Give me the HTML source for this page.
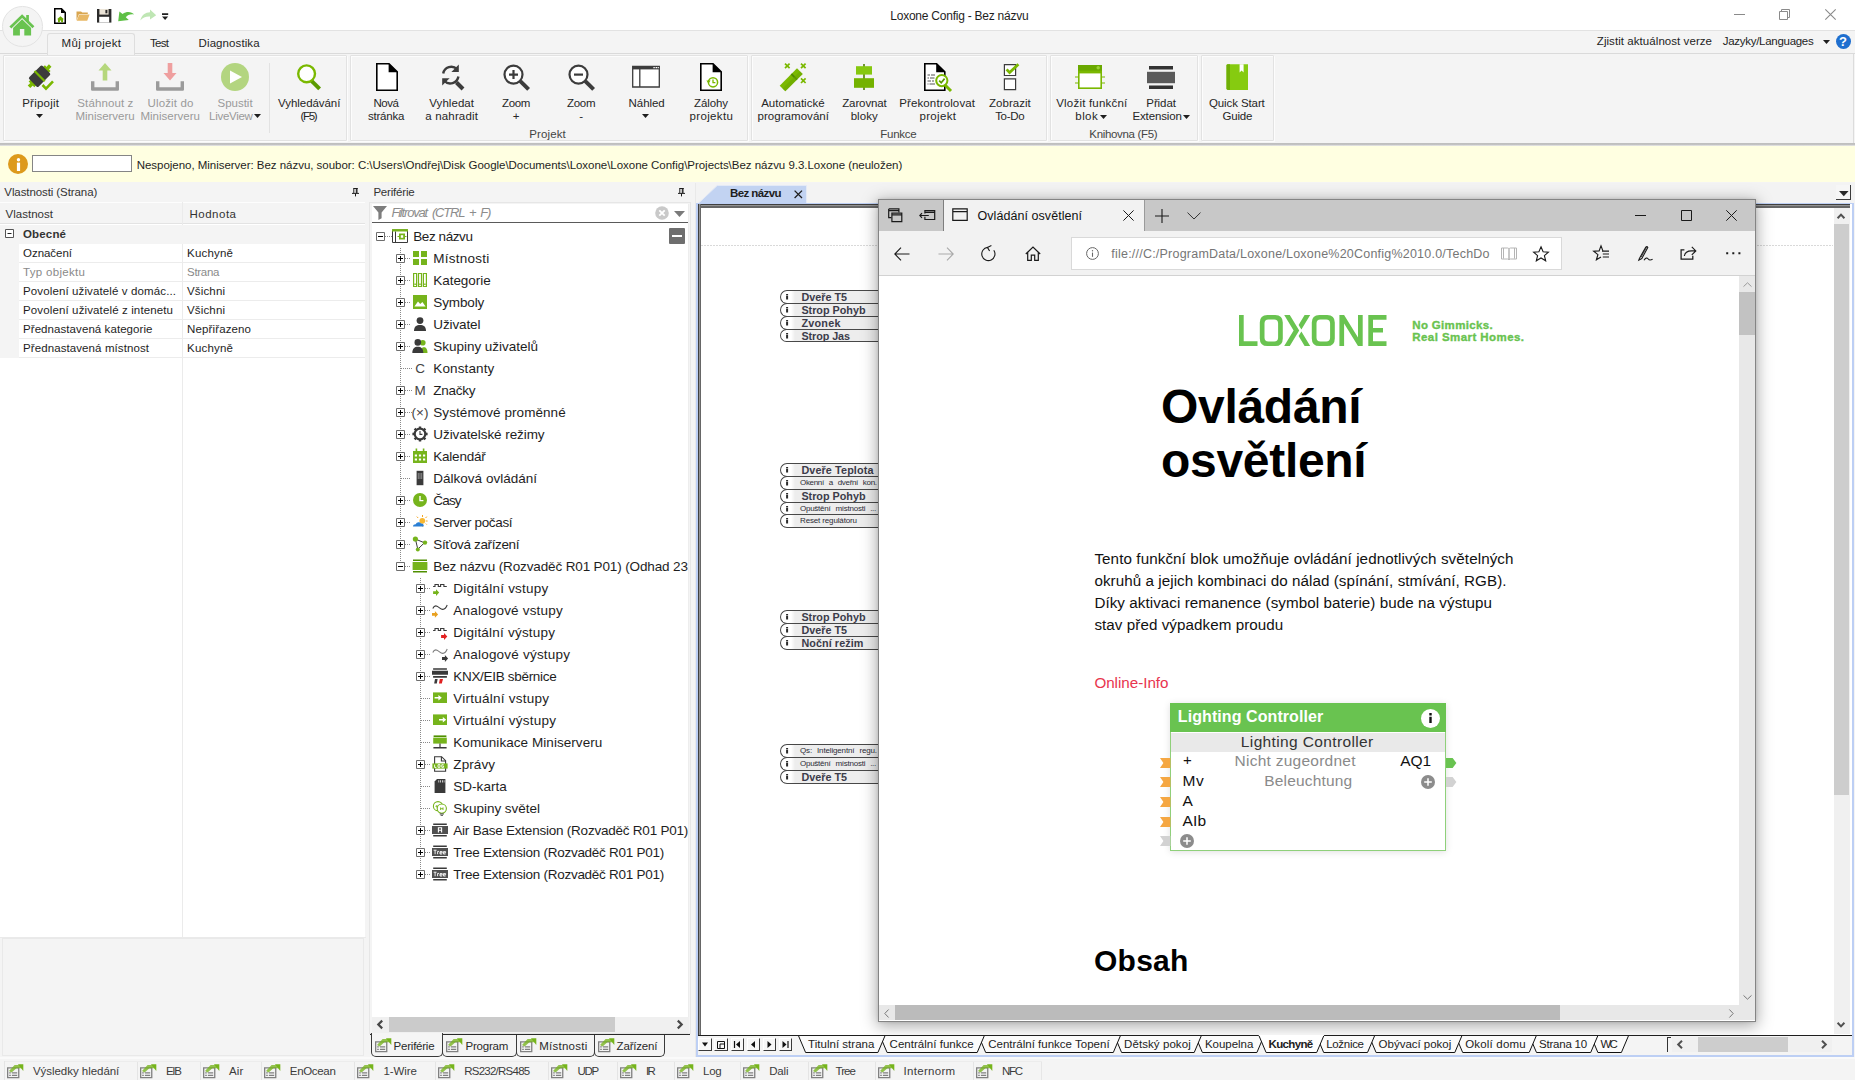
<!DOCTYPE html>
<html><head><meta charset="utf-8"><title>Loxone Config - Bez názvu</title>
<style>
html,body{margin:0;padding:0;}
body{width:1855px;height:1080px;overflow:hidden;position:relative;background:#f3f3f3;font-family:"Liberation Sans",sans-serif;font-size:12px;color:#1e1e1e;}
div,span,svg{position:absolute;box-sizing:border-box;}
span{white-space:pre;}
svg{overflow:visible;}
</style></head><body>
<div style="left:0px;top:0px;width:1855px;height:30px;background:#ffffff;"></div>
<span style="left:890.30px;top:8px;font-size:12px;line-height:17px;color:#1e1e1e;letter-spacing:-0.237px;">Loxone Config - Bez názvu</span>
<div style="left:0px;top:30px;width:1855px;height:24px;background:#f4f4f4;border-top:1px solid #e2e2e2;"></div>
<div style="left:0px;top:53px;width:1855px;height:1px;background:#dadada;"></div>
<div style="left:0px;top:54px;width:1855px;height:89px;background:#f4f4f4;"></div>
<div style="left:0px;top:142px;width:1855px;height:3.5px;background:linear-gradient(#f4f4f4 0,#f4f4f4 25%,#b4b4b4 40%,#c4c4c4 65%,#ececec 100%);"></div>
<div style="left:0px;top:145.5px;width:1855px;height:36.5px;background:#ffffe1;"></div>
<div style="left:0px;top:182px;width:1855px;height:898px;background:#f4f4f4;"></div>
<div style="left:2px;top:6px;width:40.6px;height:40.6px;background:#f4f4f4;border-radius:50%;border:1px solid #e3e3e3;"></div>
<svg style="left:9px;top:14px;" width="26" height="23" viewBox="0 0 26 23"><path d="M1.4 13.6L13.1 2.1L24.4 13.2" fill="none" stroke="#69c350" stroke-width="2.8" stroke-linejoin="miter"/><path d="M4.1 21.4V13.9L13.1 5.3L22.1 13.9V21.4H15.3V15.1H10.9V21.4Z" fill="#69c350"/><path d="M17.2 1H19.9V8L17.2 5.4Z" fill="#69c350"/></svg>
<svg style="left:54px;top:8px;" width="12" height="16" viewBox="0 0 12 16"><path d="M0.75 0.75H7.5L11.25 4.5V15.25H0.75Z" fill="#fff" stroke="#000" stroke-width="1.5"/><path d="M7 0.5L11.5 5H7Z" fill="#000"/><path d="M6.5 8.2L3 11.3H4V14.2H5.9V12.4H7.1V14.2H9V11.3H10Z" fill="#6aa800"/></svg>
<svg style="left:75.5px;top:11px;" width="14" height="10" viewBox="0 0 14 10"><path d="M0.5 0.4H5L6.3 1.6H11.8V3H3L0.5 9.4Z" fill="#d9a650"/><path d="M3.2 3.4H13.6L11.2 9.8H0.7Z" fill="#e8b866"/></svg>
<svg style="left:96.7px;top:9.2px;" width="14.4" height="13.6" viewBox="0 0 14.4 13.6"><path d="M0 0H14.4V13.6H0Z" fill="#2b2b2b"/><path d="M2.4 0H11.6V5.6H2.4Z" fill="#ece5d8"/><path d="M8.4 0.9H10.4V4.3H8.4Z" fill="#2b2b2b"/><path d="M2.2 7.8H12.2V13.6H2.2Z" fill="#fff"/></svg>
<svg style="left:117.7px;top:10.6px;" width="16.4" height="10.6" viewBox="0 0 16.4 10.6"><path d="M0.2 10.2L1.4 0.4L4.6 3C8.8 0 13.6 0.6 16.3 3.6C12.4 2.8 9.6 4.2 7.8 6.2L10.8 9Z" fill="#5fc047"/></svg>
<svg style="left:139.6px;top:9.4px;" width="16.4" height="11.8" viewBox="0 0 16.4 11.8"><path d="M16.2 6.2L10 0.4V3.2C5.6 3.2 1.4 6 0.3 11.6C2.6 8.6 5.8 7.4 10 7.6V10.6Z" fill="#bfe6b4"/></svg>
<svg style="left:162.2px;top:13px;" width="6.2" height="7" viewBox="0 0 6.2 7"><path d="M0 0.3H6.2V1.9H0Z M0 3.4H6.2L3.1 7Z" fill="#1e1e1e"/></svg>
<div style="left:47px;top:33px;width:87.5px;height:21.5px;background:#f4f4f4;border:1px solid #dedede;border-bottom:none;border-radius:3px 3px 0 0;"></div>
<span style="left:61.50px;top:35px;font-size:11.5px;line-height:16px;color:#262626;letter-spacing:0.326px;">Můj projekt</span>
<span style="left:150.00px;top:35px;font-size:11.5px;line-height:16px;color:#262626;letter-spacing:-0.697px;">Test</span>
<span style="left:198.60px;top:35px;font-size:11.5px;line-height:16px;color:#262626;letter-spacing:0.091px;">Diagnostika</span>
<span style="left:1596.80px;top:33px;font-size:11.5px;line-height:16px;color:#1e1e1e;letter-spacing:0.062px;">Zjistit aktuálnost verze</span>
<span style="left:1722.80px;top:33px;font-size:11.5px;line-height:16px;color:#1e1e1e;letter-spacing:-0.290px;">Jazyky/Languages</span>
<svg style="left:1823.1px;top:39.5px;" width="7" height="4" viewBox="0 0 7 4"><path d="M0 0H7L3.5 4Z" fill="#1e1e1e"/></svg>
<div style="left:1835.5px;top:33.5px;width:15px;height:15px;background:#1f6fcf;border-radius:50%;"></div>
<span style="left:1839.03px;top:33px;font-size:13px;line-height:18px;color:#fff;letter-spacing:0.000px;font-weight:bold;">?</span>
<svg style="left:1733.5px;top:13.5px;" width="11" height="1" viewBox="0 0 11 1"><path d="M0 0.5H11" stroke="#8a8a8a" stroke-width="1"/></svg>
<svg style="left:1778.5px;top:8.5px;" width="11" height="11" viewBox="0 0 11 11"><path d="M2.5 2.5V0.5H10.5V8.5H8.5M0.5 2.5H8.5V10.5H0.5Z" fill="none" stroke="#8a8a8a" stroke-width="1"/></svg>
<svg style="left:1824.5px;top:8.5px;" width="11" height="11" viewBox="0 0 11 11"><path d="M0.3 0.3L10.7 10.7M10.7 0.3L0.3 10.7" stroke="#8a8a8a" stroke-width="1.1"/></svg>
<div style="left:3px;top:55px;width:344px;height:86px;border:1px solid #e2e2e2;border-radius:1px;box-shadow:inset 1px 1px 0 #fcfcfc,1px 1px 0 #fcfcfc;"></div>
<div style="left:350px;top:55px;width:398px;height:86px;border:1px solid #e2e2e2;border-radius:1px;box-shadow:inset 1px 1px 0 #fcfcfc,1px 1px 0 #fcfcfc;"></div>
<div style="left:751px;top:55px;width:296px;height:86px;border:1px solid #e2e2e2;border-radius:1px;box-shadow:inset 1px 1px 0 #fcfcfc,1px 1px 0 #fcfcfc;"></div>
<div style="left:1050px;top:55px;width:148px;height:86px;border:1px solid #e2e2e2;border-radius:1px;box-shadow:inset 1px 1px 0 #fcfcfc,1px 1px 0 #fcfcfc;"></div>
<div style="left:1201px;top:55px;width:73px;height:86px;border:1px solid #e2e2e2;border-radius:1px;box-shadow:inset 1px 1px 0 #fcfcfc,1px 1px 0 #fcfcfc;"></div>
<div style="left:1852.5px;top:54px;width:1px;height:89px;background:#dcdcdc;"></div>
<div style="left:269px;top:63px;width:1px;height:70px;background:#e2e2e2;"></div>
<span style="left:529.25px;top:126px;font-size:11.5px;line-height:16px;color:#444444;letter-spacing:0.118px;">Projekt</span>
<span style="left:880.35px;top:126px;font-size:11.5px;line-height:16px;color:#444444;letter-spacing:-0.282px;">Funkce</span>
<span style="left:1089.30px;top:126px;font-size:11.5px;line-height:16px;color:#444444;letter-spacing:-0.319px;">Knihovna (F5)</span>
<span style="left:22.20px;top:95px;font-size:11.5px;line-height:16px;color:#262626;letter-spacing:0.236px;">Připojit</span>
<svg style="left:36.0px;top:114px;" width="7" height="4" viewBox="0 0 7 4"><path d="M0 0H7L3.5 4Z" fill="#1e1e1e"/></svg>
<span style="left:77.30px;top:95px;font-size:11.5px;line-height:16px;color:#9a9a9a;letter-spacing:0.113px;">Stáhnout z</span>
<span style="left:75.40px;top:108px;font-size:11.5px;line-height:16px;color:#9a9a9a;letter-spacing:-0.013px;">Miniserveru</span>
<span style="left:147.50px;top:95px;font-size:11.5px;line-height:16px;color:#9a9a9a;letter-spacing:0.145px;">Uložit do</span>
<span style="left:140.40px;top:108px;font-size:11.5px;line-height:16px;color:#9a9a9a;letter-spacing:0.007px;">Miniserveru</span>
<span style="left:217.50px;top:95px;font-size:11.5px;line-height:16px;color:#9a9a9a;letter-spacing:-0.009px;">Spustit</span>
<span style="left:209.10px;top:108px;font-size:11.5px;line-height:16px;color:#9a9a9a;letter-spacing:-0.302px;">LiveView</span>
<svg style="left:253.8px;top:114px;" width="7" height="4" viewBox="0 0 7 4"><path d="M0 0H7L3.5 4Z" fill="#1e1e1e"/></svg>
<span style="left:278.10px;top:95px;font-size:11.5px;line-height:16px;color:#262626;letter-spacing:-0.057px;">Vyhledávání</span>
<span style="left:300.40px;top:108px;font-size:11.5px;line-height:16px;color:#262626;letter-spacing:-1.260px;">(F5)</span>
<span style="left:373.50px;top:95px;font-size:11.5px;line-height:16px;color:#262626;letter-spacing:-0.515px;">Nová</span>
<span style="left:367.90px;top:108px;font-size:11.5px;line-height:16px;color:#262626;letter-spacing:-0.202px;">stránka</span>
<span style="left:429.30px;top:95px;font-size:11.5px;line-height:16px;color:#262626;letter-spacing:0.053px;">Vyhledat</span>
<span style="left:425.30px;top:108px;font-size:11.5px;line-height:16px;color:#262626;letter-spacing:0.161px;">a nahradit</span>
<span style="left:502.10px;top:95px;font-size:11.5px;line-height:16px;color:#262626;letter-spacing:-0.365px;">Zoom</span>
<span style="left:512.64px;top:108px;font-size:11.5px;line-height:16px;color:#262626;letter-spacing:-0.716px;">+</span>
<span style="left:567.00px;top:95px;font-size:11.5px;line-height:16px;color:#262626;letter-spacing:-0.299px;">Zoom</span>
<span style="left:579.29px;top:108px;font-size:11.5px;line-height:16px;color:#262626;letter-spacing:-0.230px;">-</span>
<span style="left:628.60px;top:95px;font-size:11.5px;line-height:16px;color:#262626;letter-spacing:-0.069px;">Náhled</span>
<svg style="left:642.0px;top:114px;" width="7" height="4" viewBox="0 0 7 4"><path d="M0 0H7L3.5 4Z" fill="#1e1e1e"/></svg>
<span style="left:694.00px;top:95px;font-size:11.5px;line-height:16px;color:#262626;letter-spacing:-0.083px;">Zálohy</span>
<span style="left:689.60px;top:108px;font-size:11.5px;line-height:16px;color:#262626;letter-spacing:0.327px;">projektu</span>
<span style="left:761.20px;top:95px;font-size:11.5px;line-height:16px;color:#262626;letter-spacing:0.012px;">Automatické</span>
<span style="left:757.50px;top:108px;font-size:11.5px;line-height:16px;color:#262626;letter-spacing:0.050px;">programování</span>
<span style="left:842.20px;top:95px;font-size:11.5px;line-height:16px;color:#262626;letter-spacing:-0.112px;">Zarovnat</span>
<span style="left:850.70px;top:108px;font-size:11.5px;line-height:16px;color:#262626;letter-spacing:0.038px;">bloky</span>
<span style="left:899.20px;top:95px;font-size:11.5px;line-height:16px;color:#262626;letter-spacing:0.127px;">Překontrolovat</span>
<span style="left:919.50px;top:108px;font-size:11.5px;line-height:16px;color:#262626;letter-spacing:0.314px;">projekt</span>
<span style="left:989.00px;top:95px;font-size:11.5px;line-height:16px;color:#262626;letter-spacing:0.023px;">Zobrazit</span>
<span style="left:995.20px;top:108px;font-size:11.5px;line-height:16px;color:#262626;letter-spacing:-0.319px;">To-Do</span>
<span style="left:1056.20px;top:95px;font-size:11.5px;line-height:16px;color:#262626;letter-spacing:0.208px;">Vložit funkční</span>
<span style="left:1075.30px;top:108px;font-size:11.5px;line-height:16px;color:#262626;letter-spacing:0.435px;">blok</span>
<svg style="left:1100.0px;top:114.5px;" width="7" height="4" viewBox="0 0 7 4"><path d="M0 0H7L3.5 4Z" fill="#1e1e1e"/></svg>
<span style="left:1146.30px;top:95px;font-size:11.5px;line-height:16px;color:#262626;letter-spacing:-0.088px;">Přidat</span>
<span style="left:1132.50px;top:108px;font-size:11.5px;line-height:16px;color:#262626;letter-spacing:-0.150px;">Extension</span>
<svg style="left:1183.0px;top:114.5px;" width="7" height="4" viewBox="0 0 7 4"><path d="M0 0H7L3.5 4Z" fill="#1e1e1e"/></svg>
<span style="left:1209.00px;top:95px;font-size:11.5px;line-height:16px;color:#262626;letter-spacing:-0.108px;">Quick Start</span>
<span style="left:1222.40px;top:108px;font-size:11.5px;line-height:16px;color:#262626;letter-spacing:-0.172px;">Guide</span>
<svg style="left:24.5px;top:61px;" width="32" height="32" viewBox="0 0 32 32"><g transform="translate(0.6 -0.8) rotate(-45 14 16)"><path d="M-1 14.2H3V17.8H-1Z M25 14.2H29V17.8H25Z" fill="#7ab800"/><path d="M2.5 12H5.5V20H2.5Z M22.5 12H25.5V20H22.5Z" fill="#7ab800"/><rect x="4.6" y="9.4" width="18.8" height="13.2" rx="1.6" fill="#3c3c3c"/><path d="M13 8.8H15.2V23.2H13Z" fill="#7ab800"/></g><path d="M17.5 24L21 27.6L28 20.4" fill="none" stroke="#7ab800" stroke-width="2.6"/></svg>
<svg style="left:89px;top:61px;" width="32" height="32" viewBox="0 0 32 32"><path d="M2 20.2H5.4V26.2H26.6V20.2H30V28.6Q30 29.8 28.8 29.8H3.2Q2 29.8 2 28.6Z" fill="#9b9b9b"/><path d="M16 2L22.5 9.5H18.3V19.5H13.7V9.5H9.5Z" fill="#b5d77c"/></svg>
<svg style="left:154px;top:61px;" width="32" height="32" viewBox="0 0 32 32"><path d="M2 20.2H5.4V26.2H26.6V20.2H30V28.6Q30 29.8 28.8 29.8H3.2Q2 29.8 2 28.6Z" fill="#9b9b9b"/><path d="M16 19.5L22.5 12H18.3V2H13.7V12H9.5Z" fill="#ef9f9f"/></svg>
<svg style="left:219px;top:61px;" width="32" height="32" viewBox="0 0 32 32"><circle cx="16" cy="16" r="14" fill="#b3d580"/><path d="M11 9.5L23 16L11 22.5Z" fill="#fff"/></svg>
<svg style="left:290.5px;top:61px;" width="32" height="32" viewBox="0 0 32 32"><path d="M20.3 19.6L28.6 27.8" stroke="#5a9a00" stroke-width="4" stroke-linecap="butt"/><circle cx="15.6" cy="12.8" r="8.4" fill="#fff" stroke="#7ab800" stroke-width="2.4"/></svg>
<svg style="left:371px;top:61px;" width="32" height="32" viewBox="0 0 32 32"><path d="M5.8 3H15.8L26.2 13.4V29.6H5.8Z" fill="#fff" stroke="#000" stroke-width="1.6" transform="translate(0 -0.3)"/><path d="M5.8 2.7H18L26.2 10.9V29.3H5.8Z" fill="#fff" stroke="#000" stroke-width="1.6"/><path d="M17.6 2.3L26.6 11.3H17.6Z" fill="#000"/></svg>
<svg style="left:434.6px;top:61px;" width="32" height="32" viewBox="0 0 32 32"><path d="M21.5 21.5L28 28" stroke="#3c3c3c" stroke-width="4"/>
      <path d="M8.2 12.5A8.2 8.2 0 0 1 22 8.2" fill="none" stroke="#3c3c3c" stroke-width="2.4"/><path d="M23.8 3.6V11H16.4Z" fill="#3c3c3c"/>
      <path d="M23.4 15.5A8.2 8.2 0 0 1 9.2 19.8" fill="none" stroke="#3c3c3c" stroke-width="2.4"/><path d="M7.2 24.6V17.2H14.6Z" fill="#3c3c3c"/></svg>
<svg style="left:500px;top:61px;" width="32" height="32" viewBox="0 0 32 32"><path d="M20.3 20.2L28.6 28.4" stroke="#3c3c3c" stroke-width="4"/><circle cx="13.5" cy="13.6" r="9" fill="#fff" stroke="#3c3c3c" stroke-width="2.2"/><path d="M9 13.6H18M13.5 9.1V18.1" stroke="#3c3c3c" stroke-width="2.2"/></svg>
<svg style="left:565px;top:61px;" width="32" height="32" viewBox="0 0 32 32"><path d="M20.3 20.2L28.6 28.4" stroke="#3c3c3c" stroke-width="4"/><circle cx="13.5" cy="13.6" r="9" fill="#fff" stroke="#3c3c3c" stroke-width="2.2"/><path d="M9 13.6H18" stroke="#3c3c3c" stroke-width="2.2"/></svg>
<svg style="left:630px;top:61px;" width="32" height="32" viewBox="0 0 32 32"><path d="M2.7 5.4H29.3V26H2.7Z" fill="#fff" stroke="#3c3c3c" stroke-width="1.3"/><path d="M2.7 5H29.3V8.4H2.7Z" fill="#3c3c3c"/><path d="M9.8 8V26" stroke="#3c3c3c" stroke-width="1.3"/><path d="M23.4 6.1H24.8V7.2H23.4Z M25.6 6.1H27V7.2H25.6Z M27.6 6.1H28.8V7.2H27.6Z" fill="#fff"/></svg>
<svg style="left:695px;top:61px;" width="32" height="32" viewBox="0 0 32 32"><path d="M5.8 2.7H18L26.2 10.9V29.3H5.8Z" fill="#fff" stroke="#000" stroke-width="1.6"/><path d="M17.6 2.3L26.6 11.3H17.6Z" fill="#000"/><circle cx="18" cy="21.3" r="4.6" fill="none" stroke="#7ab800" stroke-width="1.5"/><path d="M11.4 19.6H15.6L13.5 22.6Z" fill="#7ab800"/><path d="M18 18.6V21.6H20.4" fill="none" stroke="#7ab800" stroke-width="1.3"/><path d="M12.4 18H15V24H12.4Z" fill="#fff" opacity="0"/></svg>
<svg style="left:777.5px;top:61px;" width="32" height="32" viewBox="0 0 32 32"><g transform="rotate(-45 13 19)"><path d="M1 15H25.5V23H1Z" fill="#7ab800"/><path d="M16.6 15H18.4V23H16.6Z" fill="#4f8a00"/><path d="M1 19H25.5V23H1Z" fill="#6aa500" opacity=".55"/></g>
      <path d="M7 2.6L11.6 7.2M11.6 2.6L7 7.2 M23 2.6L27.6 7.2M27.6 2.6L23 7.2 M23 17.4L27.6 22M27.6 17.4L23 22" stroke="#7ab800" stroke-width="1.7"/></svg>
<svg style="left:848px;top:61px;" width="32" height="32" viewBox="0 0 32 32"><path d="M15.2 3H16.8V29H15.2Z" fill="#4f7f00"/><path d="M8 5.2H24V13.6H8Z" fill="#86c80f"/><path d="M6 17.2H26V26.8H6Z" fill="#74b200"/></svg>
<svg style="left:922px;top:61px;" width="32" height="32" viewBox="0 0 32 32"><path d="M2.8 2.7H14.6L22.8 10.9V29.3H2.8Z" fill="#fff" stroke="#000" stroke-width="1.6"/><path d="M14.2 2.3L23.2 11.3H14.2Z" fill="#000"/>
      <path d="M5.5 14H8M9 14H13 M5.5 17H7M8 17H12.5 M5.5 20H9M10 20H12 M5.5 23H6.5M7.5 23H13" stroke="#555" stroke-width="1"/>
      <path d="M23.5 24.5L29 30" stroke="#7ab800" stroke-width="3"/><circle cx="19.8" cy="19.6" r="5.6" fill="#fff" stroke="#7ab800" stroke-width="2"/><path d="M17.2 19.6L19.2 21.8L22.6 17.6" fill="none" stroke="#5a9a00" stroke-width="1.7"/></svg>
<svg style="left:994px;top:61px;" width="32" height="32" viewBox="0 0 32 32"><path d="M10.4 3.7H21.6V14.5H10.4Z M10.4 17.9H21.6V28.7H10.4Z" fill="#fff" stroke="#3c3c3c" stroke-width="1.2"/><path d="M12.6 8.4L15.6 11.6L24.4 3.2" fill="none" stroke="#7ab800" stroke-width="2.8"/></svg>
<svg style="left:1074px;top:61px;" width="32" height="32" viewBox="0 0 32 32"><path d="M1 16H4M1 22H4 M28 16H31M28 22H31" stroke="#7ab800" stroke-width="1.2"/><path d="M4 4H28V28H4Z" fill="#7ab800"/><path d="M4 4H28V9.6H4Z" fill="#6aa800"/><path d="M5.6 12.4H26.4V26.4H5.6Z" fill="#fff"/><circle cx="24.2" cy="6.8" r="1.7" fill="#9bd434"/></svg>
<svg style="left:1145px;top:61px;" width="32" height="32" viewBox="0 0 32 32"><path d="M4 5H28V8.6H4Z M4 24.4H28V28H4Z" fill="#333"/><path d="M2 10.8H30V22.2H2Z" fill="#5a5a5a"/></svg>
<svg style="left:1221px;top:61px;" width="32" height="32" viewBox="0 0 32 32"><path d="M5.5 4.6Q5.5 3.2 7 3.2H27V29H7Q5.5 29 5.5 27.6Z" fill="#86cb10"/><path d="M5.5 4.6Q5.5 3.2 7 3.2H9V29H7Q5.5 29 5.5 27.6Z" fill="#6fae06"/><path d="M18.6 3.2H22.6V11.4L20.6 9.6L18.6 11.4Z" fill="#fff"/></svg>
<div style="left:8px;top:153.5px;width:20px;height:20px;background:#dd9a1c;border-radius:50%;"></div>
<svg style="left:15.5px;top:157.5px;" width="5" height="13" viewBox="0 0 5 13"><circle cx="2.5" cy="1.7" r="1.7" fill="#fff"/><path d="M0.9 4.6H4.1V13H0.9Z" fill="#fff" /></svg>
<div style="left:32px;top:155px;width:100px;height:17px;background:#fff;border:1px solid #858585;"></div>
<span style="left:136.70px;top:157px;font-size:11.5px;line-height:16px;color:#1e1e1e;letter-spacing:-0.029px;">Nespojeno, Miniserver: Bez názvu, soubor: C:\Users\Ondřej\Disk Google\Documents\Loxone\Loxone Config\Projects\Bez názvu 9.3.Loxone (neuložen)</span>
<span style="left:4.30px;top:184px;font-size:11.5px;line-height:16px;color:#333;letter-spacing:-0.089px;">Vlastnosti (Strana)</span>
<svg style="left:352px;top:187.7px;" width="7" height="9" viewBox="0 0 7 9"><path d="M1.3 0.5H5.8M1.8 0.5V5M5 0.5V5M4.3 0.5V5M0 5.4H7M3.5 5.4V8.4" stroke="#1e1e1e" stroke-width="1" fill="none"/></svg>
<div style="left:0px;top:202px;width:365.4px;height:735px;background:#ffffff;"></div>
<div style="left:0px;top:202px;width:365.4px;height:22px;background:#f4f4f4;border-bottom:1px solid #e3e3e3;border-top:1px solid #fdfdfd;"></div>
<div style="left:182.4px;top:202px;width:1px;height:735px;background:#ebebeb;"></div>
<span style="left:5.50px;top:206px;font-size:11.5px;line-height:16px;color:#333;letter-spacing:0.025px;">Vlastnost</span>
<span style="left:189.50px;top:206px;font-size:11.5px;line-height:16px;color:#333;letter-spacing:0.504px;">Hodnota</span>
<div style="left:0px;top:224.5px;width:365.4px;height:19px;background:#f4f4f4;"></div>
<div style="left:0px;top:243.5px;width:19px;height:114px;background:#f4f4f4;"></div>
<svg style="left:5px;top:228.5px;" width="9" height="9" viewBox="0 0 9 9"><path d="M0.5 0.5H8.5V8.5H0.5Z" fill="#fff" stroke="#555" stroke-width="1"/><path d="M2.5 4.5H6.5" stroke="#222" stroke-width="1"/></svg>
<span style="left:23.00px;top:226px;font-size:11.5px;line-height:16px;color:#333;letter-spacing:0.164px;font-weight:bold;">Obecné</span>
<span style="left:23.00px;top:245px;font-size:11.5px;line-height:16px;color:#1e1e1e;letter-spacing:-0.032px;">Označení</span>
<span style="left:187.00px;top:245px;font-size:11.5px;line-height:16px;color:#1e1e1e;letter-spacing:0.208px;">Kuchyně</span>
<div style="left:19px;top:262.0px;width:346.4px;height:1px;background:#ececec;"></div>
<span style="left:23.00px;top:264px;font-size:11.5px;line-height:16px;color:#8a8a8a;letter-spacing:0.319px;">Typ objektu</span>
<span style="left:187.00px;top:264px;font-size:11.5px;line-height:16px;color:#8a8a8a;letter-spacing:-0.276px;">Strana</span>
<div style="left:19px;top:281.0px;width:346.4px;height:1px;background:#ececec;"></div>
<span style="left:23.00px;top:283px;font-size:11.5px;line-height:16px;color:#1e1e1e;letter-spacing:0.122px;">Povolení uživatelé v domác...</span>
<span style="left:187.00px;top:283px;font-size:11.5px;line-height:16px;color:#1e1e1e;letter-spacing:0.155px;">Všichni</span>
<div style="left:19px;top:300.0px;width:346.4px;height:1px;background:#ececec;"></div>
<span style="left:23.00px;top:302px;font-size:11.5px;line-height:16px;color:#1e1e1e;letter-spacing:0.129px;">Povolení uživatelé z intenetu</span>
<span style="left:187.00px;top:302px;font-size:11.5px;line-height:16px;color:#1e1e1e;letter-spacing:0.155px;">Všichni</span>
<div style="left:19px;top:319.0px;width:346.4px;height:1px;background:#ececec;"></div>
<span style="left:23.00px;top:321px;font-size:11.5px;line-height:16px;color:#1e1e1e;letter-spacing:0.074px;">Přednastavená kategorie</span>
<span style="left:187.00px;top:321px;font-size:11.5px;line-height:16px;color:#1e1e1e;letter-spacing:0.136px;">Nepřiřazeno</span>
<div style="left:19px;top:338.0px;width:346.4px;height:1px;background:#ececec;"></div>
<span style="left:23.00px;top:340px;font-size:11.5px;line-height:16px;color:#1e1e1e;letter-spacing:0.095px;">Přednastavená místnost</span>
<span style="left:187.00px;top:340px;font-size:11.5px;line-height:16px;color:#1e1e1e;letter-spacing:0.208px;">Kuchyně</span>
<div style="left:19px;top:357.0px;width:346.4px;height:1px;background:#ececec;"></div>
<div style="left:1.5px;top:938px;width:362.5px;height:118px;background:#f4f4f4;border:1px solid #e9e9e9;"></div>
<div style="left:0px;top:937px;width:366px;height:1px;background:#eaeaea;"></div>
<span style="left:373.40px;top:184px;font-size:11.5px;line-height:16px;color:#333;letter-spacing:-0.190px;">Periférie</span>
<svg style="left:677.8px;top:187.7px;" width="7" height="9" viewBox="0 0 7 9"><path d="M1.3 0.5H5.8M1.8 0.5V5M5 0.5V5M4.3 0.5V5M0 5.4H7M3.5 5.4V8.4" stroke="#1e1e1e" stroke-width="1" fill="none"/></svg>
<div style="left:369.3px;top:202.4px;width:321.7px;height:832px;background:#f4f4f4;border:1px solid #e6e6e6;"></div>
<div style="left:371.5px;top:204px;width:317px;height:813px;background:#ffffff;"></div>
<svg style="left:373px;top:206px;" width="14" height="14" viewBox="0 0 14 14"><path d="M0 0H14L8.6 6.4V12.2L5.4 14V6.4Z" fill="#7d7d7d"/></svg>
<span style="left:391.40px;top:204px;font-size:13px;line-height:18px;color:#8c8c8c;letter-spacing:-1.184px;font-style:italic;word-spacing:2.5px;">Filtrovat (CTRL + F)</span>
<svg style="left:655px;top:206px;" width="14" height="14" viewBox="0 0 14 14"><circle cx="7" cy="7" r="6.8" fill="#c9c9c9"/><path d="M4.3 4.3L9.7 9.7M9.7 4.3L4.3 9.7" stroke="#fff" stroke-width="1.8"/></svg>
<svg style="left:673.5px;top:210.5px;" width="11" height="6" viewBox="0 0 11 6"><path d="M0 0H11L5.5 6Z" fill="#7a7a7a"/></svg>
<div style="left:372px;top:221.8px;width:316px;height:1px;background:#5a5a5a;"></div>
<div style="left:669px;top:228.3px;width:16px;height:15.5px;background:#6e6e6e;border-radius:1px;"></div>
<div style="left:671.8px;top:235px;width:10.4px;height:2px;background:#fff;"></div>
<div style="left:400px;top:248px;width:1px;height:318px;background-image:linear-gradient(to bottom,#8a8a8a 50%,transparent 50%);background-size:1px 2px;"></div>
<div style="left:420px;top:578px;width:1px;height:297px;background-image:linear-gradient(to bottom,#8a8a8a 50%,transparent 50%);background-size:1px 2px;"></div>
<div style="left:385px;top:236.0px;width:7px;height:1px;background-image:linear-gradient(to right,#8a8a8a 50%,transparent 50%);background-size:2px 1px;"></div>
<svg style="left:376.0px;top:232.0px;" width="9" height="9" viewBox="0 0 9 9"><path d="M0.5 0.5H8.5V8.5H0.5Z" fill="#fff" stroke="#6e6e6e" stroke-width="1"/><path d="M2 4.5H7" stroke="#000" stroke-width="1"/></svg>
<svg style="left:392px;top:228px;" width="16" height="16" viewBox="0 0 16 16"><path d="M0.5 2H15.5V14.5H0.5Z" fill="#fff" stroke="#3a3a3a" stroke-width="1"/><path d="M0 1.1H16V3.5H0Z" fill="#76b41c"/><path d="M3.5 3.5V14.5" stroke="#3a3a3a" stroke-width="1"/><path d="M7 5.5H13V11.5H7Z" fill="#76b41c"/><path d="M8.8 7.2H11.2V9.8H8.8Z" fill="#fff"/><path d="M5.5 8.5H7M13 8.5H14.5" stroke="#76b41c" stroke-width="1"/></svg>
<span style="left:413.30px;top:227px;font-size:13.5px;line-height:19px;color:#1e1e1e;letter-spacing:-0.430px;">Bez názvu</span>
<div style="left:401.0px;top:258px;width:10px;height:1px;background-image:linear-gradient(to right,#8a8a8a 50%,transparent 50%);background-size:2px 1px;"></div>
<svg style="left:396.0px;top:254.0px;" width="9" height="9" viewBox="0 0 9 9"><path d="M0.5 0.5H8.5V8.5H0.5Z" fill="#fff" stroke="#6e6e6e" stroke-width="1"/><path d="M2 4.5H7" stroke="#000" stroke-width="1"/><path d="M4.5 2V7" stroke="#000" stroke-width="1"/></svg>
<svg style="left:412px;top:250px;" width="16" height="16" viewBox="0 0 16 16"><path d="M1 1H7V7H1Z M9 1H15V7H9Z M1 9H7V15H1Z M9 9H15V15H9Z" fill="#76b41c"/></svg>
<span style="left:433.30px;top:249px;font-size:13.5px;line-height:19px;color:#1e1e1e;letter-spacing:0.236px;">Místnosti</span>
<div style="left:401.0px;top:280px;width:10px;height:1px;background-image:linear-gradient(to right,#8a8a8a 50%,transparent 50%);background-size:2px 1px;"></div>
<svg style="left:396.0px;top:276.0px;" width="9" height="9" viewBox="0 0 9 9"><path d="M0.5 0.5H8.5V8.5H0.5Z" fill="#fff" stroke="#6e6e6e" stroke-width="1"/><path d="M2 4.5H7" stroke="#000" stroke-width="1"/><path d="M4.5 2V7" stroke="#000" stroke-width="1"/></svg>
<svg style="left:412px;top:272px;" width="16" height="16" viewBox="0 0 16 16"><path d="M1.6 1.5H4.6V14.5H1.6Z M6.5 1.5H9.5V14.5H6.5Z M11.4 1.5H14.4V14.5H11.4Z" fill="#fff" stroke="#76b41c" stroke-width="1.2"/><path d="M2.4 11.6H3.8V13H2.4Z M7.3 11.6H8.7V13H7.3Z M12.2 11.6H13.6V13H12.2Z" fill="#76b41c"/></svg>
<span style="left:433.30px;top:271px;font-size:13.5px;line-height:19px;color:#1e1e1e;letter-spacing:-0.049px;">Kategorie</span>
<div style="left:401.0px;top:302px;width:10px;height:1px;background-image:linear-gradient(to right,#8a8a8a 50%,transparent 50%);background-size:2px 1px;"></div>
<svg style="left:396.0px;top:298.0px;" width="9" height="9" viewBox="0 0 9 9"><path d="M0.5 0.5H8.5V8.5H0.5Z" fill="#fff" stroke="#6e6e6e" stroke-width="1"/><path d="M2 4.5H7" stroke="#000" stroke-width="1"/><path d="M4.5 2V7" stroke="#000" stroke-width="1"/></svg>
<svg style="left:412px;top:294px;" width="16" height="16" viewBox="0 0 16 16"><path d="M1 1H15V15H1Z" fill="#76b41c"/><path d="M2.4 12.6L6 7.4L8.2 10L10.4 8L13.6 12.6Z" fill="#fff"/></svg>
<span style="left:433.30px;top:293px;font-size:13.5px;line-height:19px;color:#1e1e1e;letter-spacing:-0.128px;">Symboly</span>
<div style="left:401.0px;top:324px;width:10px;height:1px;background-image:linear-gradient(to right,#8a8a8a 50%,transparent 50%);background-size:2px 1px;"></div>
<svg style="left:396.0px;top:320.0px;" width="9" height="9" viewBox="0 0 9 9"><path d="M0.5 0.5H8.5V8.5H0.5Z" fill="#fff" stroke="#6e6e6e" stroke-width="1"/><path d="M2 4.5H7" stroke="#000" stroke-width="1"/><path d="M4.5 2V7" stroke="#000" stroke-width="1"/></svg>
<svg style="left:412px;top:316px;" width="16" height="16" viewBox="0 0 16 16"><circle cx="8" cy="4.6" r="3.4" fill="#3a3a3a"/><path d="M2 15C2 10.5 4.5 9 8 9S14 10.5 14 15Z" fill="#3a3a3a"/></svg>
<span style="left:433.30px;top:315px;font-size:13.5px;line-height:19px;color:#1e1e1e;letter-spacing:-0.116px;">Uživatel</span>
<div style="left:401.0px;top:346px;width:10px;height:1px;background-image:linear-gradient(to right,#8a8a8a 50%,transparent 50%);background-size:2px 1px;"></div>
<svg style="left:396.0px;top:342.0px;" width="9" height="9" viewBox="0 0 9 9"><path d="M0.5 0.5H8.5V8.5H0.5Z" fill="#fff" stroke="#6e6e6e" stroke-width="1"/><path d="M2 4.5H7" stroke="#000" stroke-width="1"/><path d="M4.5 2V7" stroke="#000" stroke-width="1"/></svg>
<svg style="left:412px;top:338px;" width="16" height="16" viewBox="0 0 16 16"><circle cx="10.8" cy="4.8" r="2.8" fill="#76b41c"/><path d="M8.5 15C8.5 11 10 9.2 12 9.2S15.5 11 15.5 15Z" fill="#76b41c"/><circle cx="5.8" cy="4.4" r="3.3" fill="#3a3a3a"/><path d="M0.3 15C0.3 10.6 2.6 8.8 5.8 8.8S11.3 10.6 11.3 15Z" fill="#3a3a3a"/></svg>
<span style="left:433.30px;top:337px;font-size:13.5px;line-height:19px;color:#1e1e1e;letter-spacing:-0.029px;">Skupiny uživatelů</span>
<div style="left:401.0px;top:368px;width:11px;height:1px;background-image:linear-gradient(to right,#8a8a8a 50%,transparent 50%);background-size:2px 1px;"></div>
<span style="left:415.13px;top:359px;font-size:13.5px;line-height:19px;color:#444;letter-spacing:0.000px;">C</span>
<span style="left:433.30px;top:359px;font-size:13.5px;line-height:19px;color:#1e1e1e;letter-spacing:0.120px;">Konstanty</span>
<div style="left:401.0px;top:390px;width:11px;height:1px;background-image:linear-gradient(to right,#8a8a8a 50%,transparent 50%);background-size:2px 1px;"></div>
<svg style="left:396.0px;top:386.0px;" width="9" height="9" viewBox="0 0 9 9"><path d="M0.5 0.5H8.5V8.5H0.5Z" fill="#fff" stroke="#6e6e6e" stroke-width="1"/><path d="M2 4.5H7" stroke="#000" stroke-width="1"/><path d="M4.5 2V7" stroke="#000" stroke-width="1"/></svg>
<span style="left:414.38px;top:381px;font-size:13.5px;line-height:19px;color:#444;letter-spacing:0.000px;">M</span>
<span style="left:433.30px;top:381px;font-size:13.5px;line-height:19px;color:#1e1e1e;letter-spacing:-0.262px;">Značky</span>
<div style="left:401.0px;top:412px;width:11px;height:1px;background-image:linear-gradient(to right,#8a8a8a 50%,transparent 50%);background-size:2px 1px;"></div>
<svg style="left:396.0px;top:408.0px;" width="9" height="9" viewBox="0 0 9 9"><path d="M0.5 0.5H8.5V8.5H0.5Z" fill="#fff" stroke="#6e6e6e" stroke-width="1"/><path d="M2 4.5H7" stroke="#000" stroke-width="1"/><path d="M4.5 2V7" stroke="#000" stroke-width="1"/></svg>
<span style="left:411.56px;top:403px;font-size:13.5px;line-height:19px;color:#444;letter-spacing:0.000px;">(×)</span>
<span style="left:433.30px;top:403px;font-size:13.5px;line-height:19px;color:#1e1e1e;letter-spacing:0.064px;">Systémové proměnné</span>
<div style="left:401.0px;top:434px;width:10px;height:1px;background-image:linear-gradient(to right,#8a8a8a 50%,transparent 50%);background-size:2px 1px;"></div>
<svg style="left:396.0px;top:430.0px;" width="9" height="9" viewBox="0 0 9 9"><path d="M0.5 0.5H8.5V8.5H0.5Z" fill="#fff" stroke="#6e6e6e" stroke-width="1"/><path d="M2 4.5H7" stroke="#000" stroke-width="1"/><path d="M4.5 2V7" stroke="#000" stroke-width="1"/></svg>
<svg style="left:412px;top:426px;" width="16" height="16" viewBox="0 0 16 16"><circle cx="8" cy="8" r="5.3" fill="#fff" stroke="#3a3a3a" stroke-width="2.2"/><g stroke="#3a3a3a" stroke-width="2.4"><path d="M8 0.4V2.6M8 13.4V15.6M0.4 8H2.6M13.4 8H15.6M2.6 2.6L4.2 4.2M11.8 11.8L13.4 13.4M13.4 2.6L11.8 4.2M2.6 13.4L4.2 11.8"/></g><path d="M8 5V8.4H10.4" fill="none" stroke="#3a3a3a" stroke-width="1.1"/></svg>
<span style="left:433.30px;top:425px;font-size:13.5px;line-height:19px;color:#1e1e1e;letter-spacing:-0.072px;">Uživatelské režimy</span>
<div style="left:401.0px;top:456px;width:10px;height:1px;background-image:linear-gradient(to right,#8a8a8a 50%,transparent 50%);background-size:2px 1px;"></div>
<svg style="left:396.0px;top:452.0px;" width="9" height="9" viewBox="0 0 9 9"><path d="M0.5 0.5H8.5V8.5H0.5Z" fill="#fff" stroke="#6e6e6e" stroke-width="1"/><path d="M2 4.5H7" stroke="#000" stroke-width="1"/><path d="M4.5 2V7" stroke="#000" stroke-width="1"/></svg>
<svg style="left:412px;top:448px;" width="16" height="16" viewBox="0 0 16 16"><path d="M1 3H15V15H1Z" fill="#76b41c"/><path d="M3.6 0.6H5.2V4H3.6Z M10.8 0.6H12.4V4H10.8Z" fill="#76b41c"/><path d="M2.8 6.4H5V8.4H2.8Z M6.9 6.4H9.1V8.4H6.9Z M11 6.4H13.2V8.4H11Z M2.8 10.6H5V12.6H2.8Z M6.9 10.6H9.1V12.6H6.9Z M11 10.6H13.2V12.6H11Z" fill="#fff"/></svg>
<span style="left:433.30px;top:447px;font-size:13.5px;line-height:19px;color:#1e1e1e;letter-spacing:-0.234px;">Kalendář</span>
<div style="left:401.0px;top:478px;width:10px;height:1px;background-image:linear-gradient(to right,#8a8a8a 50%,transparent 50%);background-size:2px 1px;"></div>
<svg style="left:412px;top:470px;" width="16" height="16" viewBox="0 0 16 16"><path d="M4.6 0.8H11.4V15.2H4.6Z" fill="#3a3a3a"/><path d="M5.8 3.4H6.8V4.4H5.8Z M7.5 3.4H8.5V4.4H7.5Z M9.2 3.4H10.2V4.4H9.2Z M5.8 5.4H6.8V6.4H5.8Z M7.5 5.4H8.5V6.4H7.5Z M9.2 5.4H10.2V6.4H9.2Z M5.8 7.4H6.8V8.4H5.8Z M7.5 7.4H8.5V8.4H7.5Z M9.2 7.4H10.2V8.4H9.2Z" fill="#ddd"/></svg>
<span style="left:433.30px;top:469px;font-size:13.5px;line-height:19px;color:#1e1e1e;letter-spacing:0.009px;">Dálková ovládání</span>
<div style="left:401.0px;top:500px;width:10px;height:1px;background-image:linear-gradient(to right,#8a8a8a 50%,transparent 50%);background-size:2px 1px;"></div>
<svg style="left:396.0px;top:496.0px;" width="9" height="9" viewBox="0 0 9 9"><path d="M0.5 0.5H8.5V8.5H0.5Z" fill="#fff" stroke="#6e6e6e" stroke-width="1"/><path d="M2 4.5H7" stroke="#000" stroke-width="1"/><path d="M4.5 2V7" stroke="#000" stroke-width="1"/></svg>
<svg style="left:412px;top:492px;" width="16" height="16" viewBox="0 0 16 16"><circle cx="8" cy="8" r="7" fill="#76b41c"/><path d="M8 4V8.6H11.4" fill="none" stroke="#fff" stroke-width="1.4"/></svg>
<span style="left:433.30px;top:491px;font-size:13.5px;line-height:19px;color:#1e1e1e;letter-spacing:-0.819px;">Časy</span>
<div style="left:401.0px;top:522px;width:10px;height:1px;background-image:linear-gradient(to right,#8a8a8a 50%,transparent 50%);background-size:2px 1px;"></div>
<svg style="left:396.0px;top:518.0px;" width="9" height="9" viewBox="0 0 9 9"><path d="M0.5 0.5H8.5V8.5H0.5Z" fill="#fff" stroke="#6e6e6e" stroke-width="1"/><path d="M2 4.5H7" stroke="#000" stroke-width="1"/><path d="M4.5 2V7" stroke="#000" stroke-width="1"/></svg>
<svg style="left:412px;top:514px;" width="16" height="16" viewBox="0 0 16 16"><g stroke="#f5a623" stroke-width="1"><path d="M10.5 1V3M10.5 11V12.5M4.8 2.6L6.2 4M14.8 2.6L13.6 4M15.6 7H13.8M14.8 10.6L13.8 9.6"/></g><circle cx="10.3" cy="6.8" r="2.9" fill="#f7b731"/><path d="M1 12.6C1 10.8 2.6 10 3.8 10.2C4.4 8 7.6 7.4 9 9.6C11 9.2 12.2 11 11.6 12.6Z" fill="#2a7fd4"/></svg>
<span style="left:433.30px;top:513px;font-size:13.5px;line-height:19px;color:#1e1e1e;letter-spacing:-0.332px;">Server počasí</span>
<div style="left:401.0px;top:544px;width:10px;height:1px;background-image:linear-gradient(to right,#8a8a8a 50%,transparent 50%);background-size:2px 1px;"></div>
<svg style="left:396.0px;top:540.0px;" width="9" height="9" viewBox="0 0 9 9"><path d="M0.5 0.5H8.5V8.5H0.5Z" fill="#fff" stroke="#6e6e6e" stroke-width="1"/><path d="M2 4.5H7" stroke="#000" stroke-width="1"/><path d="M4.5 2V7" stroke="#000" stroke-width="1"/></svg>
<svg style="left:412px;top:536px;" width="16" height="16" viewBox="0 0 16 16"><path d="M3.4 3L12.4 6.8L5.8 13.2Z" fill="none" stroke="#3a3a3a" stroke-width="1"/><circle cx="3.4" cy="3" r="2.6" fill="#76b41c"/><circle cx="13" cy="6.6" r="2.2" fill="#76b41c"/><circle cx="5.8" cy="13.4" r="2" fill="#76b41c"/></svg>
<span style="left:433.30px;top:535px;font-size:13.5px;line-height:19px;color:#1e1e1e;letter-spacing:-0.375px;">Síťová zařízení</span>
<div style="left:401.0px;top:566px;width:10px;height:1px;background-image:linear-gradient(to right,#8a8a8a 50%,transparent 50%);background-size:2px 1px;"></div>
<svg style="left:396.0px;top:562.0px;" width="9" height="9" viewBox="0 0 9 9"><path d="M0.5 0.5H8.5V8.5H0.5Z" fill="#fff" stroke="#6e6e6e" stroke-width="1"/><path d="M2 4.5H7" stroke="#000" stroke-width="1"/></svg>
<svg style="left:412px;top:558px;" width="16" height="16" viewBox="0 0 16 16"><path d="M1 1.4H15V3H1Z M1 13H15V14.6H1Z" fill="#4f8f00"/><path d="M0.6 4H15.4V12H0.6Z" fill="#76b41c"/></svg>
<span style="left:433.30px;top:557px;font-size:13.5px;line-height:19px;color:#1e1e1e;letter-spacing:-0.136px;">Bez názvu (Rozvaděč R01 P01) (Odhad 23</span>
<div style="left:421.0px;top:588px;width:10px;height:1px;background-image:linear-gradient(to right,#8a8a8a 50%,transparent 50%);background-size:2px 1px;"></div>
<svg style="left:416.0px;top:584.0px;" width="9" height="9" viewBox="0 0 9 9"><path d="M0.5 0.5H8.5V8.5H0.5Z" fill="#fff" stroke="#6e6e6e" stroke-width="1"/><path d="M2 4.5H7" stroke="#000" stroke-width="1"/><path d="M4.5 2V7" stroke="#000" stroke-width="1"/></svg>
<svg style="left:432px;top:580px;" width="16" height="16" viewBox="0 0 16 16"><path d="M1.1 6.5H3V4.5H6.3V6.5H8.6V4.5H11.9V6.5H14.8" fill="none" stroke="#3a3a3a" stroke-width="1.1"/><path d="M1.1 11.2H4V9.2L7.2 12.5L4 15.9V13.9H1.1Z" fill="#76b41c"/></svg>
<span style="left:453.30px;top:579px;font-size:13.5px;line-height:19px;color:#1e1e1e;letter-spacing:0.231px;">Digitální vstupy</span>
<div style="left:421.0px;top:610px;width:10px;height:1px;background-image:linear-gradient(to right,#8a8a8a 50%,transparent 50%);background-size:2px 1px;"></div>
<svg style="left:416.0px;top:606.0px;" width="9" height="9" viewBox="0 0 9 9"><path d="M0.5 0.5H8.5V8.5H0.5Z" fill="#fff" stroke="#6e6e6e" stroke-width="1"/><path d="M2 4.5H7" stroke="#000" stroke-width="1"/><path d="M4.5 2V7" stroke="#000" stroke-width="1"/></svg>
<svg style="left:432px;top:602px;" width="16" height="16" viewBox="0 0 16 16"><path d="M0.8 6.6C2 4 3.6 3.6 5 4.2C7.4 5.2 8.6 7.6 10.8 7.4C13 7.2 14.4 5 15.2 3" fill="none" stroke="#3a3a3a" stroke-width="1.1"/><path d="M0 11.1H2.9V9.1L6.1 12.4L2.9 15.8V13.8H0Z" fill="#e8a020"/></svg>
<span style="left:453.30px;top:601px;font-size:13.5px;line-height:19px;color:#1e1e1e;letter-spacing:0.189px;">Analogové vstupy</span>
<div style="left:421.0px;top:632px;width:10px;height:1px;background-image:linear-gradient(to right,#8a8a8a 50%,transparent 50%);background-size:2px 1px;"></div>
<svg style="left:416.0px;top:628.0px;" width="9" height="9" viewBox="0 0 9 9"><path d="M0.5 0.5H8.5V8.5H0.5Z" fill="#fff" stroke="#6e6e6e" stroke-width="1"/><path d="M2 4.5H7" stroke="#000" stroke-width="1"/><path d="M4.5 2V7" stroke="#000" stroke-width="1"/></svg>
<svg style="left:432px;top:624px;" width="16" height="16" viewBox="0 0 16 16"><path d="M1.1 6.5H3V4.5H6.3V6.5H8.6V4.5H11.9V6.5H14.8" fill="none" stroke="#3a3a3a" stroke-width="1.1"/><path d="M9.1 11.1H12V9.1L15.3 12.5L12 16V14H9.1Z" fill="#e32222"/></svg>
<span style="left:453.30px;top:623px;font-size:13.5px;line-height:19px;color:#1e1e1e;letter-spacing:0.213px;">Digitální výstupy</span>
<div style="left:421.0px;top:654px;width:10px;height:1px;background-image:linear-gradient(to right,#8a8a8a 50%,transparent 50%);background-size:2px 1px;"></div>
<svg style="left:416.0px;top:650.0px;" width="9" height="9" viewBox="0 0 9 9"><path d="M0.5 0.5H8.5V8.5H0.5Z" fill="#fff" stroke="#6e6e6e" stroke-width="1"/><path d="M2 4.5H7" stroke="#000" stroke-width="1"/><path d="M4.5 2V7" stroke="#000" stroke-width="1"/></svg>
<svg style="left:432px;top:646px;" width="16" height="16" viewBox="0 0 16 16"><path d="M0.8 6.6C2 4 3.6 3.6 5 4.2C7.4 5.2 8.6 7.6 10.8 7.4C13 7.2 14.4 5 15.2 3" fill="none" stroke="#7d7d7d" stroke-width="1.1"/><path d="M10 10.9H12.9V8.9L16.1 12.4L12.9 16V14H10Z" fill="#3a3a3a"/></svg>
<span style="left:453.30px;top:645px;font-size:13.5px;line-height:19px;color:#1e1e1e;letter-spacing:0.211px;">Analogové výstupy</span>
<div style="left:421.0px;top:676px;width:10px;height:1px;background-image:linear-gradient(to right,#8a8a8a 50%,transparent 50%);background-size:2px 1px;"></div>
<svg style="left:416.0px;top:672.0px;" width="9" height="9" viewBox="0 0 9 9"><path d="M0.5 0.5H8.5V8.5H0.5Z" fill="#fff" stroke="#6e6e6e" stroke-width="1"/><path d="M2 4.5H7" stroke="#000" stroke-width="1"/><path d="M4.5 2V7" stroke="#000" stroke-width="1"/></svg>
<svg style="left:432px;top:668px;" width="16" height="16" viewBox="0 0 16 16"><path d="M1.1 0.2H14.9V1.7H1.1Z M0 2.8H16V6.7H0Z M1.1 7.9H14.9V9.7H1.1Z" fill="#3a3a3a"/><path d="M3 10.9H5.6L4.8 15.6H2.2Z" fill="#3a3a3a"/><path d="M7.8 10.9H11L9.8 15.6H7Z" fill="#e02020"/></svg>
<span style="left:453.30px;top:667px;font-size:13.5px;line-height:19px;color:#1e1e1e;letter-spacing:-0.310px;">KNX/EIB sběrnice</span>
<div style="left:421.0px;top:698px;width:10px;height:1px;background-image:linear-gradient(to right,#8a8a8a 50%,transparent 50%);background-size:2px 1px;"></div>
<svg style="left:432px;top:690px;" width="16" height="16" viewBox="0 0 16 16"><path d="M1 2.4H15V13H1Z" fill="#76b41c"/><path d="M2.6 7H6.4V5L9.8 7.8L6.4 10.6V8.6H2.6Z" fill="#fff"/></svg>
<span style="left:453.30px;top:689px;font-size:13.5px;line-height:19px;color:#1e1e1e;letter-spacing:0.243px;">Virtuální vstupy</span>
<div style="left:421.0px;top:720px;width:10px;height:1px;background-image:linear-gradient(to right,#8a8a8a 50%,transparent 50%);background-size:2px 1px;"></div>
<svg style="left:432px;top:712px;" width="16" height="16" viewBox="0 0 16 16"><path d="M1 2.4H15V13H1Z" fill="#76b41c"/><path d="M7 7H10.8V5L14.2 7.8L10.8 10.6V8.6H7Z" fill="#fff"/></svg>
<span style="left:453.30px;top:711px;font-size:13.5px;line-height:19px;color:#1e1e1e;letter-spacing:0.244px;">Virtuální výstupy</span>
<div style="left:421.0px;top:742px;width:10px;height:1px;background-image:linear-gradient(to right,#8a8a8a 50%,transparent 50%);background-size:2px 1px;"></div>
<svg style="left:432px;top:734px;" width="16" height="16" viewBox="0 0 16 16"><path d="M1.6 1.4H14.4V3H1.6Z" fill="#4f8f00"/><path d="M1.2 3.6H14.8V9.6H1.2Z" fill="#76b41c"/><path d="M7.4 9.6H8.6V13H7.4Z M1.4 13H14.6V14.4H1.4Z" fill="#3a3a3a"/></svg>
<span style="left:453.30px;top:733px;font-size:13.5px;line-height:19px;color:#1e1e1e;letter-spacing:0.057px;">Komunikace Miniserveru</span>
<div style="left:421.0px;top:764px;width:10px;height:1px;background-image:linear-gradient(to right,#8a8a8a 50%,transparent 50%);background-size:2px 1px;"></div>
<svg style="left:416.0px;top:760.0px;" width="9" height="9" viewBox="0 0 9 9"><path d="M0.5 0.5H8.5V8.5H0.5Z" fill="#fff" stroke="#6e6e6e" stroke-width="1"/><path d="M2 4.5H7" stroke="#000" stroke-width="1"/><path d="M4.5 2V7" stroke="#000" stroke-width="1"/></svg>
<svg style="left:432px;top:756px;" width="16" height="16" viewBox="0 0 16 16"><path d="M2.6 0.7H9.6L13.6 4.7V15.3H2.6Z" fill="#fff" stroke="#3a3a3a" stroke-width="1.1"/><path d="M9.4 0.7V5H13.6" fill="none" stroke="#3a3a3a" stroke-width="1.1"/><path d="M0.4 7.4H15.6V12.6H0.4Z" fill="#76b41c"/><path d="M2.6 8.6V11.4H4.4M6 8.7H8V11.3H6Z M11.6 8.7H9.8V11.3H11.6V10.1H10.8" fill="none" stroke="#fff" stroke-width="0.9"/></svg>
<span style="left:453.30px;top:755px;font-size:13.5px;line-height:19px;color:#1e1e1e;letter-spacing:0.088px;">Zprávy</span>
<div style="left:421.0px;top:786px;width:10px;height:1px;background-image:linear-gradient(to right,#8a8a8a 50%,transparent 50%);background-size:2px 1px;"></div>
<svg style="left:432px;top:778px;" width="16" height="16" viewBox="0 0 16 16"><path d="M5 1H13.4V15H2.6V3.6Z" fill="#3a3a3a"/><path d="M6.4 2.2H7.2V4.6H6.4Z M8.2 2.2H9V4.6H8.2Z M10 2.2H10.8V4.6H10Z M11.8 2.2H12.4V4.6H11.8Z" fill="#eee"/></svg>
<span style="left:453.30px;top:777px;font-size:13.5px;line-height:19px;color:#1e1e1e;letter-spacing:0.020px;">SD-karta</span>
<div style="left:421.0px;top:808px;width:10px;height:1px;background-image:linear-gradient(to right,#8a8a8a 50%,transparent 50%);background-size:2px 1px;"></div>
<svg style="left:432px;top:800px;" width="16" height="16" viewBox="0 0 16 16"><circle cx="6" cy="6.2" r="4.6" fill="#fff" stroke="#76b41c" stroke-width="1.1"/><circle cx="9.8" cy="8.6" r="4.6" fill="#fff" stroke="#76b41c" stroke-width="1.1"/><path d="M8.6 7.4V10M11 7.4V10M8.6 8.7H11" stroke="#76b41c" stroke-width="0.9" fill="none"/><path d="M7.8 13.6H11.8V14.6H7.8Z M8.6 15H11V15.8H8.6Z" fill="#3a3a3a"/><path d="M4.8 5V7.6M3.4 6.3H6" stroke="#76b41c" stroke-width="0.8"/></svg>
<span style="left:453.30px;top:799px;font-size:13.5px;line-height:19px;color:#1e1e1e;letter-spacing:-0.027px;">Skupiny světel</span>
<div style="left:421.0px;top:830px;width:10px;height:1px;background-image:linear-gradient(to right,#8a8a8a 50%,transparent 50%);background-size:2px 1px;"></div>
<svg style="left:416.0px;top:826.0px;" width="9" height="9" viewBox="0 0 9 9"><path d="M0.5 0.5H8.5V8.5H0.5Z" fill="#fff" stroke="#6e6e6e" stroke-width="1"/><path d="M2 4.5H7" stroke="#000" stroke-width="1"/><path d="M4.5 2V7" stroke="#000" stroke-width="1"/></svg>
<svg style="left:432px;top:822px;" width="16" height="16" viewBox="0 0 16 16"><path d="M1.2 1.6H14.8V2.9H1.2Z M1.2 13.1H14.8V14.4H1.2Z" fill="#3a3a3a"/><path d="M0 4H16V12H0Z" fill="#505050"/><path d="M6.4 10.4V5.8H9.6V10.4M6.4 8.2H9.6" fill="none" stroke="#fff" stroke-width="1.1"/></svg>
<span style="left:453.30px;top:821px;font-size:13.5px;line-height:19px;color:#1e1e1e;letter-spacing:-0.226px;">Air Base Extension (Rozvaděč R01 P01)</span>
<div style="left:421.0px;top:852px;width:10px;height:1px;background-image:linear-gradient(to right,#8a8a8a 50%,transparent 50%);background-size:2px 1px;"></div>
<svg style="left:416.0px;top:848.0px;" width="9" height="9" viewBox="0 0 9 9"><path d="M0.5 0.5H8.5V8.5H0.5Z" fill="#fff" stroke="#6e6e6e" stroke-width="1"/><path d="M2 4.5H7" stroke="#000" stroke-width="1"/><path d="M4.5 2V7" stroke="#000" stroke-width="1"/></svg>
<svg style="left:432px;top:844px;" width="16" height="16" viewBox="0 0 16 16"><path d="M1.2 1.6H14.8V2.9H1.2Z M1.2 13.1H14.8V14.4H1.2Z" fill="#3a3a3a"/><path d="M0 4H16V12H0Z" fill="#505050"/><path d="M1.6 6.2H4.6M3.1 6.2V10.2 M5.6 10.2V7.4H7 M8 8.8H10.2V7.6H8V10H10.2 M11.4 8.8H13.6V7.6H11.4V10H13.6" fill="none" stroke="#fff" stroke-width="0.9"/></svg>
<span style="left:453.30px;top:843px;font-size:13.5px;line-height:19px;color:#1e1e1e;letter-spacing:-0.261px;">Tree Extension (Rozvaděč R01 P01)</span>
<div style="left:421.0px;top:874px;width:10px;height:1px;background-image:linear-gradient(to right,#8a8a8a 50%,transparent 50%);background-size:2px 1px;"></div>
<svg style="left:416.0px;top:870.0px;" width="9" height="9" viewBox="0 0 9 9"><path d="M0.5 0.5H8.5V8.5H0.5Z" fill="#fff" stroke="#6e6e6e" stroke-width="1"/><path d="M2 4.5H7" stroke="#000" stroke-width="1"/><path d="M4.5 2V7" stroke="#000" stroke-width="1"/></svg>
<svg style="left:432px;top:866px;" width="16" height="16" viewBox="0 0 16 16"><path d="M1.2 1.6H14.8V2.9H1.2Z M1.2 13.1H14.8V14.4H1.2Z" fill="#3a3a3a"/><path d="M0 4H16V12H0Z" fill="#505050"/><path d="M1.6 6.2H4.6M3.1 6.2V10.2 M5.6 10.2V7.4H7 M8 8.8H10.2V7.6H8V10H10.2 M11.4 8.8H13.6V7.6H11.4V10H13.6" fill="none" stroke="#fff" stroke-width="0.9"/></svg>
<span style="left:453.30px;top:865px;font-size:13.5px;line-height:19px;color:#1e1e1e;letter-spacing:-0.261px;">Tree Extension (Rozvaděč R01 P01)</span>
<div style="left:688.3px;top:204px;width:2px;height:813px;background:#f4f4f4;"></div>
<div style="left:688.3px;top:204px;width:1px;height:830px;background:#ededed;"></div>
<div style="left:371.5px;top:1017px;width:317px;height:15.5px;background:#f0f0f0;"></div>
<div style="left:389px;top:1017.3px;width:226px;height:14.7px;background:#cbcbcb;"></div>
<svg style="left:376.5px;top:1020px;" width="6" height="9" viewBox="0 0 6 9"><path d="M5.2 0.6L1.3 4.5L5.2 8.4" fill="none" stroke="#484848" stroke-width="2.2"/></svg>
<svg style="left:676.5px;top:1020px;" width="6" height="9" viewBox="0 0 6 9"><path d="M0.8 0.6L4.7 4.5L0.8 8.4" fill="none" stroke="#484848" stroke-width="2.2"/></svg>
<div style="left:695px;top:182.5px;width:1px;height:875px;background:#e9e9e9;"></div>
<div style="left:696px;top:183px;width:1159px;height:20.5px;background:#f3f3f3;"></div>
<svg style="left:699px;top:185px;" width="110" height="18.5" viewBox="0 0 110 18.5"><path d="M-0.8 18.5L18.2 0.5H107.5V18.5Z" fill="#c2d3f2" stroke="#e4eaf6" stroke-width="1"/></svg>
<span style="left:730.10px;top:185px;font-size:11.5px;line-height:16px;color:#1e1e1e;letter-spacing:-0.592px;font-weight:bold;">Bez názvu</span>
<svg style="left:793.5px;top:189.5px;" width="8.6" height="8.6" viewBox="0 0 8.6 8.6"><path d="M0.6 0.6L8 8M8 0.6L0.6 8" stroke="#1e1e1e" stroke-width="1.3"/></svg>
<div style="left:1836px;top:185px;width:15px;height:15px;background:#f6f6f6;border-right:1px solid #3c3c3c;border-bottom:1px solid #3c3c3c;"></div>
<svg style="left:1838.8px;top:191px;" width="9.6" height="5.2" viewBox="0 0 9.6 5.2"><path d="M0 0H9.6L4.8 5.2Z" fill="#2a2a2a"/></svg>
<div style="left:696px;top:203px;width:1158px;height:853.8px;background:#bdcff4;"></div>
<div style="left:698px;top:204px;width:1154.2px;height:851px;background:#ffffff;"></div>
<div style="left:698px;top:204px;width:1152px;height:3.7px;background:linear-gradient(#404040 0,#404040 27%,#939393 27%,#939393 54%,#666 54%,#666 100%);"></div>
<div style="left:698px;top:204px;width:3.1px;height:831px;background:linear-gradient(to right,#404040 0,#404040 32%,#939393 32%,#939393 64%,#666 64%,#666 100%);"></div>
<div style="left:701.2px;top:207.6px;width:1132.6px;height:826px;background:#ffffff;"></div>
<div style="left:701.2px;top:245px;width:1132px;height:1px;background-image:linear-gradient(to right,#d9d9d9 55%,transparent 55%);background-size:3px 1px;"></div>
<div style="left:1834px;top:207.6px;width:16px;height:826.4px;background:#f0f0f0;"></div>
<div style="left:1834px;top:224px;width:15.4px;height:571px;background:#cdcdcd;"></div>
<svg style="left:1837.4px;top:213px;" width="8" height="6" viewBox="0 0 8 6"><path d="M0.6 5.2L4 1.6L7.4 5.2" fill="none" stroke="#505050" stroke-width="2"/></svg>
<svg style="left:1837.4px;top:1021.5px;" width="8" height="6" viewBox="0 0 8 6"><path d="M0.6 0.8L4 4.4L7.4 0.8" fill="none" stroke="#505050" stroke-width="2"/></svg>
<div style="left:780px;top:290px;width:110px;height:14px;border:1px solid #484848;border-right:none;border-radius:7px 0 0 7px;background:linear-gradient(to right,#ffffff 0,#ffffff 10px,#ededed 14px,#ededed 100%);"></div>
<svg style="left:785.9px;top:294.1px;" width="2.2" height="5.6" viewBox="0 0 2.2 5.6"><path d="M0.1 0H2.1V1.5H0.1Z M0.1 2.1H2.1V5.6H0.1Z" fill="#2a2a2a"/></svg>
<span style="left:801.40px;top:290px;font-size:10.8px;line-height:15px;color:#3c3c4a;letter-spacing:0.012px;font-weight:bold;">Dveře T5</span>
<div style="left:780px;top:303px;width:110px;height:14px;border:1px solid #484848;border-right:none;border-radius:7px 0 0 7px;background:linear-gradient(to right,#ffffff 0,#ffffff 10px,#ededed 14px,#ededed 100%);"></div>
<svg style="left:785.9px;top:307.1px;" width="2.2" height="5.6" viewBox="0 0 2.2 5.6"><path d="M0.1 0H2.1V1.5H0.1Z M0.1 2.1H2.1V5.6H0.1Z" fill="#2a2a2a"/></svg>
<span style="left:801.40px;top:303px;font-size:10.8px;line-height:15px;color:#3c3c4a;letter-spacing:-0.008px;font-weight:bold;">Strop Pohyb</span>
<div style="left:780px;top:316px;width:110px;height:14px;border:1px solid #484848;border-right:none;border-radius:7px 0 0 7px;background:linear-gradient(to right,#ffffff 0,#ffffff 10px,#ededed 14px,#ededed 100%);"></div>
<svg style="left:785.9px;top:320.1px;" width="2.2" height="5.6" viewBox="0 0 2.2 5.6"><path d="M0.1 0H2.1V1.5H0.1Z M0.1 2.1H2.1V5.6H0.1Z" fill="#2a2a2a"/></svg>
<span style="left:801.40px;top:316px;font-size:10.8px;line-height:15px;color:#3c3c4a;letter-spacing:0.240px;font-weight:bold;">Zvonek</span>
<div style="left:780px;top:329px;width:110px;height:13px;border:1px solid #484848;border-right:none;border-radius:7px 0 0 7px;background:linear-gradient(to right,#ffffff 0,#ffffff 10px,#ededed 14px,#ededed 100%);"></div>
<svg style="left:785.9px;top:333.1px;" width="2.2" height="5.6" viewBox="0 0 2.2 5.6"><path d="M0.1 0H2.1V1.5H0.1Z M0.1 2.1H2.1V5.6H0.1Z" fill="#2a2a2a"/></svg>
<span style="left:801.40px;top:329px;font-size:10.8px;line-height:15px;color:#3c3c4a;letter-spacing:-0.075px;font-weight:bold;">Strop Jas</span>
<div style="left:780px;top:463px;width:110px;height:14px;border:1px solid #484848;border-right:none;border-radius:7px 0 0 7px;background:linear-gradient(to right,#ffffff 0,#ffffff 10px,#ededed 14px,#ededed 100%);"></div>
<svg style="left:785.9px;top:467.1px;" width="2.2" height="5.6" viewBox="0 0 2.2 5.6"><path d="M0.1 0H2.1V1.5H0.1Z M0.1 2.1H2.1V5.6H0.1Z" fill="#2a2a2a"/></svg>
<span style="left:801.40px;top:463px;font-size:10.8px;line-height:15px;color:#3c3c4a;letter-spacing:0.117px;font-weight:bold;">Dveře Teplota</span>
<div style="left:780px;top:476px;width:110px;height:14px;border:1px solid #484848;border-right:none;border-radius:7px 0 0 7px;background:linear-gradient(to right,#ffffff 0,#ffffff 10px,#ededed 14px,#ededed 100%);"></div>
<svg style="left:785.9px;top:480.1px;" width="2.2" height="5.6" viewBox="0 0 2.2 5.6"><path d="M0.1 0H2.1V1.5H0.1Z M0.1 2.1H2.1V5.6H0.1Z" fill="#2a2a2a"/></svg>
<span style="left:800.00px;top:477px;font-size:8px;line-height:11px;color:#2c2c36;letter-spacing:-0.330px;word-spacing:3px;">Okenní a dveřní kon.</span>
<div style="left:780px;top:489px;width:110px;height:14px;border:1px solid #484848;border-right:none;border-radius:7px 0 0 7px;background:linear-gradient(to right,#ffffff 0,#ffffff 10px,#ededed 14px,#ededed 100%);"></div>
<svg style="left:785.9px;top:493.1px;" width="2.2" height="5.6" viewBox="0 0 2.2 5.6"><path d="M0.1 0H2.1V1.5H0.1Z M0.1 2.1H2.1V5.6H0.1Z" fill="#2a2a2a"/></svg>
<span style="left:801.40px;top:489px;font-size:10.8px;line-height:15px;color:#3c3c4a;letter-spacing:-0.008px;font-weight:bold;">Strop Pohyb</span>
<div style="left:780px;top:502px;width:110px;height:13px;border:1px solid #484848;border-right:none;border-radius:7px 0 0 7px;background:linear-gradient(to right,#ffffff 0,#ffffff 10px,#ededed 14px,#ededed 100%);"></div>
<svg style="left:785.9px;top:506.1px;" width="2.2" height="5.6" viewBox="0 0 2.2 5.6"><path d="M0.1 0H2.1V1.5H0.1Z M0.1 2.1H2.1V5.6H0.1Z" fill="#2a2a2a"/></svg>
<span style="left:800.00px;top:503px;font-size:8px;line-height:11px;color:#2c2c36;letter-spacing:-0.252px;word-spacing:3px;">Opuštění místnosti ...</span>
<div style="left:780px;top:514px;width:110px;height:14px;border:1px solid #484848;border-right:none;border-radius:7px 0 0 7px;background:linear-gradient(to right,#ffffff 0,#ffffff 10px,#ededed 14px,#ededed 100%);"></div>
<svg style="left:785.9px;top:518.1px;" width="2.2" height="5.6" viewBox="0 0 2.2 5.6"><path d="M0.1 0H2.1V1.5H0.1Z M0.1 2.1H2.1V5.6H0.1Z" fill="#2a2a2a"/></svg>
<span style="left:800.00px;top:515px;font-size:8px;line-height:11px;color:#2c2c36;letter-spacing:-0.143px;word-spacing:0px;">Reset regulátoru</span>
<div style="left:780px;top:610px;width:110px;height:14px;border:1px solid #484848;border-right:none;border-radius:7px 0 0 7px;background:linear-gradient(to right,#ffffff 0,#ffffff 10px,#ededed 14px,#ededed 100%);"></div>
<svg style="left:785.9px;top:614.1px;" width="2.2" height="5.6" viewBox="0 0 2.2 5.6"><path d="M0.1 0H2.1V1.5H0.1Z M0.1 2.1H2.1V5.6H0.1Z" fill="#2a2a2a"/></svg>
<span style="left:801.40px;top:610px;font-size:10.8px;line-height:15px;color:#3c3c4a;letter-spacing:-0.008px;font-weight:bold;">Strop Pohyb</span>
<div style="left:780px;top:623px;width:110px;height:14px;border:1px solid #484848;border-right:none;border-radius:7px 0 0 7px;background:linear-gradient(to right,#ffffff 0,#ffffff 10px,#ededed 14px,#ededed 100%);"></div>
<svg style="left:785.9px;top:627.1px;" width="2.2" height="5.6" viewBox="0 0 2.2 5.6"><path d="M0.1 0H2.1V1.5H0.1Z M0.1 2.1H2.1V5.6H0.1Z" fill="#2a2a2a"/></svg>
<span style="left:801.40px;top:623px;font-size:10.8px;line-height:15px;color:#3c3c4a;letter-spacing:0.012px;font-weight:bold;">Dveře T5</span>
<div style="left:780px;top:636px;width:110px;height:13.5px;border:1px solid #484848;border-right:none;border-radius:7px 0 0 7px;background:linear-gradient(to right,#ffffff 0,#ffffff 10px,#ededed 14px,#ededed 100%);"></div>
<svg style="left:785.9px;top:640.1px;" width="2.2" height="5.6" viewBox="0 0 2.2 5.6"><path d="M0.1 0H2.1V1.5H0.1Z M0.1 2.1H2.1V5.6H0.1Z" fill="#2a2a2a"/></svg>
<span style="left:801.40px;top:636px;font-size:10.8px;line-height:15px;color:#3c3c4a;letter-spacing:0.080px;font-weight:bold;">Noční režim</span>
<div style="left:780px;top:744px;width:110px;height:14px;border:1px solid #484848;border-right:none;border-radius:7px 0 0 7px;background:linear-gradient(to right,#ffffff 0,#ffffff 10px,#ededed 14px,#ededed 100%);"></div>
<svg style="left:785.9px;top:748.1px;" width="2.2" height="5.6" viewBox="0 0 2.2 5.6"><path d="M0.1 0H2.1V1.5H0.1Z M0.1 2.1H2.1V5.6H0.1Z" fill="#2a2a2a"/></svg>
<span style="left:800.00px;top:745px;font-size:8px;line-height:11px;color:#2c2c36;letter-spacing:-0.156px;word-spacing:3px;">Qs: Inteligentní regu.</span>
<div style="left:780px;top:757px;width:110px;height:14px;border:1px solid #484848;border-right:none;border-radius:7px 0 0 7px;background:linear-gradient(to right,#ffffff 0,#ffffff 10px,#ededed 14px,#ededed 100%);"></div>
<svg style="left:785.9px;top:761.1px;" width="2.2" height="5.6" viewBox="0 0 2.2 5.6"><path d="M0.1 0H2.1V1.5H0.1Z M0.1 2.1H2.1V5.6H0.1Z" fill="#2a2a2a"/></svg>
<span style="left:800.00px;top:758px;font-size:8px;line-height:11px;color:#2c2c36;letter-spacing:-0.252px;word-spacing:3px;">Opuštění místnosti ...</span>
<div style="left:780px;top:770px;width:110px;height:14px;border:1px solid #484848;border-right:none;border-radius:7px 0 0 7px;background:linear-gradient(to right,#ffffff 0,#ffffff 10px,#ededed 14px,#ededed 100%);"></div>
<svg style="left:785.9px;top:774.1px;" width="2.2" height="5.6" viewBox="0 0 2.2 5.6"><path d="M0.1 0H2.1V1.5H0.1Z M0.1 2.1H2.1V5.6H0.1Z" fill="#2a2a2a"/></svg>
<span style="left:801.40px;top:770px;font-size:10.8px;line-height:15px;color:#3c3c4a;letter-spacing:0.012px;font-weight:bold;">Dveře T5</span>
<div style="left:878px;top:199px;width:878px;height:822.5px;background:#ffffff;box-shadow:0 3px 15px 1px rgba(0,0,0,0.34),0 0 3px rgba(0,0,0,0.12);border:1px solid #848484;"></div>
<div style="left:879px;top:200px;width:876px;height:31px;background:#c8c8c8;"></div>
<div style="left:943.7px;top:200px;width:200.8px;height:31px;background:#f2f2f2;"></div>
<div style="left:879px;top:230.8px;width:876px;height:44.4px;background:#f2f2f2;"></div>
<div style="left:879px;top:275px;width:876px;height:1px;background:#d2d2d2;"></div>
<svg style="left:888px;top:208px;" width="15" height="15" viewBox="0 0 15 15"><path d="M0.7 0.9H10.9V4.6 M0.7 0.9V9.6H3.4 M0.7 2.6H10.9" fill="none" stroke="#1a1a1a" stroke-width="1.2"/><path d="M3.9 5.2H13.8V13.6H3.9Z M3.9 6.9H13.8" fill="none" stroke="#1a1a1a" stroke-width="1.2"/></svg>
<svg style="left:919px;top:209px;" width="17" height="12" viewBox="0 0 17 12"><path d="M5.9 4.4V1.7H15.7V10.5H5.9V7.8 M5.9 3.3H15.7" fill="none" stroke="#1a1a1a" stroke-width="1.2"/><path d="M0.8 6.5H9.8 M3 4.2L0.8 6.5L3 8.8" fill="none" stroke="#1a1a1a" stroke-width="1.1"/></svg>
<div style="left:943.2px;top:200px;width:1px;height:31px;background:#7e7e7e;"></div>
<div style="left:1144.2px;top:200px;width:1px;height:31px;background:#9a9a9a;"></div>
<svg style="left:952px;top:208px;" width="16" height="13" viewBox="0 0 16 13"><path d="M0.8 0.9H15.2V12.4H0.8Z M0.8 3.6H15.2" fill="none" stroke="#1a1a1a" stroke-width="1.2"/></svg>
<span style="left:977.50px;top:207px;font-size:12.5px;line-height:18px;color:#111;letter-spacing:0.057px;">Ovládání osvětlení</span>
<svg style="left:1122.5px;top:209.7px;" width="11" height="11" viewBox="0 0 11 11"><path d="M0.4 0.4L10.6 10.6M10.6 0.4L0.4 10.6" stroke="#1a1a1a" stroke-width="1"/></svg>
<svg style="left:1154.5px;top:208.5px;" width="14" height="14" viewBox="0 0 14 14"><path d="M7 0V14M0 7H14" stroke="#1a1a1a" stroke-width="1.1"/></svg>
<svg style="left:1186.5px;top:211.5px;" width="14" height="8" viewBox="0 0 14 8"><path d="M0.5 0.6L7 7L13.5 0.6" fill="none" stroke="#333" stroke-width="1"/></svg>
<svg style="left:1634.5px;top:214.5px;" width="11" height="1" viewBox="0 0 11 1"><path d="M0 0.5H11" stroke="#1a1a1a" stroke-width="1"/></svg>
<svg style="left:1680.5px;top:209.5px;" width="11" height="11" viewBox="0 0 11 11"><path d="M0.5 0.5H10.5V10.5H0.5Z" fill="none" stroke="#1a1a1a" stroke-width="1"/></svg>
<svg style="left:1726.3px;top:209.5px;" width="11" height="11" viewBox="0 0 11 11"><path d="M0.3 0.3L10.7 10.7M10.7 0.3L0.3 10.7" stroke="#1a1a1a" stroke-width="1"/></svg>
<svg style="left:893.5px;top:246.5px;" width="16" height="14" viewBox="0 0 16 14"><path d="M0.8 7H15.5M7 0.7L0.8 7L7 13.3" fill="none" stroke="#1a1a1a" stroke-width="1.1"/></svg>
<svg style="left:937.5px;top:246.5px;" width="16" height="14" viewBox="0 0 16 14"><path d="M0.5 7H15.2M9 0.7L15.2 7L9 13.3" fill="none" stroke="#a9a9a9" stroke-width="1.1"/></svg>
<svg style="left:981px;top:245px;transform:scaleX(-1);" width="16" height="17" viewBox="0 0 16 17"><path d="M9.4 2.4A6.6 6.6 0 1 1 3.2 5.2" fill="none" stroke="#1a1a1a" stroke-width="1.1"/><path d="M5.6 0.6L9.6 2.4L7.4 6" fill="none" stroke="#1a1a1a" stroke-width="1.1"/></svg>
<svg style="left:1025px;top:245.5px;" width="16" height="15" viewBox="0 0 16 15"><path d="M0.8 8L8 1L15.2 8 M2.7 6.4V14.4H6.3V9.2H9.7V14.4H13.3V6.4" fill="none" stroke="#1a1a1a" stroke-width="1.2"/></svg>
<div style="left:1071.3px;top:236.6px;width:491px;height:33px;background:#ffffff;border:1px solid #d9d9d9;"></div>
<svg style="left:1086px;top:247px;" width="13" height="13" viewBox="0 0 13 13"><circle cx="6.5" cy="6.5" r="5.9" fill="none" stroke="#666" stroke-width="1"/><path d="M6.5 5.6V9.8" stroke="#666" stroke-width="1.1"/><circle cx="6.5" cy="3.7" r="0.7" fill="#666"/></svg>
<span style="left:1111.30px;top:245px;font-size:12.5px;line-height:18px;color:#767676;letter-spacing:0.219px;">file:///C:/ProgramData/Loxone/Loxone%20Config%2010.0/TechDo</span>
<svg style="left:1501px;top:246.5px;" width="16" height="14" viewBox="0 0 16 14"><path d="M0.5 1H6.5Q8 1 8 2.4V13Q8 12 6.5 12H0.5Z M15.5 1H9.5Q8 1 8 2.4V13Q8 12 9.5 12H15.5Z" fill="none" stroke="#b4b4b4" stroke-width="1"/><path d="M2.5 1V11.6M13.5 1V11.6" stroke="#b4b4b4" stroke-width="1"/></svg>
<svg style="left:1533px;top:245.5px;" width="16" height="16" viewBox="0 0 16 16"><path d="M8 0.8L10.1 5.7L15.4 6.1L11.4 9.6L12.7 14.8L8 12L3.3 14.8L4.6 9.6L0.6 6.1L5.9 5.7Z" fill="none" stroke="#1a1a1a" stroke-width="1.1"/></svg>
<svg style="left:1593px;top:245px;" width="17" height="16" viewBox="0 0 17 16"><path d="M9.9 5.9L8 0.9L6.1 5.9L0.7 6.2L4.9 9.6L3.4 14.8L8 11.9" fill="none" stroke="#1a1a1a" stroke-width="1.15" stroke-linejoin="miter"/><path d="M9 6.2H16M9.8 9H16M9.8 12H16" stroke="#1a1a1a" stroke-width="1.2"/></svg>
<svg style="left:1637px;top:245px;" width="17" height="17" viewBox="0 0 17 17"><path d="M2.4 13.4L8.8 2.2Q10 1 10.8 2.4L4.8 13.6L1.8 15.2Z" fill="none" stroke="#1a1a1a" stroke-width="1.1"/><path d="M4.2 12L9.6 2.2" stroke="#1a1a1a" stroke-width="0.8"/><path d="M7 15.2Q9.4 11.6 11.2 14Q12.6 15.8 15.6 14.2" fill="none" stroke="#1a1a1a" stroke-width="1.1"/></svg>
<svg style="left:1680px;top:245.5px;" width="17" height="16" viewBox="0 0 17 16"><path d="M4.4 3.9H1.1V13.2H12.8V9.8" fill="none" stroke="#1a1a1a" stroke-width="1.25"/><path d="M4.4 10Q5 4.8 11.6 4.8H15.4M11.8 0.9L15.8 4.9L11.8 8.9" fill="none" stroke="#1a1a1a" stroke-width="1.15"/></svg>
<svg style="left:1725.5px;top:251.6px;" width="15" height="3" viewBox="0 0 15 3"><path d="M0.2 0.2H2.2V2.2H0.2Z M6.3 0.2H8.3V2.2H6.3Z M12.4 0.2H14.4V2.2H12.4Z" fill="#1a1a1a"/></svg>
<div style="left:1739.2px;top:276px;width:15.4px;height:729px;background:#e8e8e8;"></div>
<div style="left:1739.2px;top:292.2px;width:15.4px;height:42.4px;background:#c2c2c2;"></div>
<svg style="left:1742.5px;top:281.5px;" width="9" height="5" viewBox="0 0 9 5"><path d="M0.5 4.6L4.5 0.8L8.5 4.6" fill="none" stroke="#9a9a9a" stroke-width="1"/></svg>
<svg style="left:1742.5px;top:994.5px;" width="9" height="5" viewBox="0 0 9 5"><path d="M0.5 0.4L4.5 4.2L8.5 0.4" fill="none" stroke="#777" stroke-width="1"/></svg>
<div style="left:879px;top:1005px;width:876px;height:15.3px;background:#e8e8e8;"></div>
<div style="left:895px;top:1005px;width:665.4px;height:15.3px;background:#bbbbbb;"></div>
<svg style="left:884px;top:1008.5px;" width="5" height="9" viewBox="0 0 5 9"><path d="M4.6 0.5L0.8 4.5L4.6 8.5" fill="none" stroke="#777" stroke-width="1"/></svg>
<svg style="left:1729px;top:1008.5px;" width="5" height="9" viewBox="0 0 5 9"><path d="M0.4 0.5L4.2 4.5L0.4 8.5" fill="none" stroke="#777" stroke-width="1"/></svg>
<svg style="left:1238.6px;top:315.2px;" width="147.5" height="31" viewBox="0 0 147.5 31"><g fill="#69c350"><path d="M0 0H4.7V26.3H18.5V31H0Z"/><path d="M28.4 0H36.2Q43.8 0 43.8 7.6V23.4Q43.8 31 36.2 31H28.4Q20.8 31 20.8 23.4V7.6Q20.8 0 28.4 0ZM29.4 4.6Q25.5 4.6 25.5 8.5V22.5Q25.5 26.4 29.4 26.4H35.2Q39.1 26.4 39.1 22.5V8.5Q39.1 4.6 35.2 4.6Z" fill-rule="evenodd"/><path d="M45.2 0H50.8L60.2 15.5L50.8 31H45.2L54.6 15.5Z"/><path d="M71.2 0H65.6L59.6 9.9L62.4 14.5Z M71.2 31H65.6L59.6 21.1L62.4 16.5Z"/><path d="M80.4 0H88.2Q95.8 0 95.8 7.6V23.4Q95.8 31 88.2 31H80.4Q72.8 31 72.8 23.4V7.6Q72.8 0 80.4 0ZM81.4 4.6Q77.5 4.6 77.5 8.5V22.5Q77.5 26.4 81.4 26.4H87.2Q91.1 26.4 91.1 22.5V8.5Q91.1 4.6 87.2 4.6Z" fill-rule="evenodd"/><path d="M100.4 0H105.1L119 22.6V0H123.7V31H119L105.1 8.4V31H100.4Z"/><path d="M129.3 0H147.5V4.7H134V13H144V17.6H134V26.3H147.5V31H129.3Z"/></g></svg>
<span style="left:1412.30px;top:317px;font-size:11.5px;line-height:16px;color:#69c350;letter-spacing:0.328px;font-weight:bold;-webkit-text-stroke:0.35px #69c350;">No Gimmicks.</span>
<span style="left:1412.30px;top:329px;font-size:11.5px;line-height:16px;color:#69c350;letter-spacing:0.430px;font-weight:bold;-webkit-text-stroke:0.35px #69c350;">Real Smart Homes.</span>
<span style="left:1161.00px;top:373px;font-size:48px;line-height:67px;color:#000;letter-spacing:-0.300px;font-weight:bold;">Ovládání</span>
<span style="left:1161.00px;top:427px;font-size:48px;line-height:67px;color:#000;letter-spacing:-0.300px;font-weight:bold;">osvětlení</span>
<span style="left:1094.40px;top:548px;font-size:15.2px;line-height:21px;color:#111;letter-spacing:0.092px;">Tento funkční blok umožňuje ovládání jednotlivých světelných</span>
<span style="left:1094.40px;top:570px;font-size:15.2px;line-height:21px;color:#111;letter-spacing:0.060px;">okruhů a jejich kombinaci do nálad (spínání, stmívání, RGB).</span>
<span style="left:1094.40px;top:592px;font-size:15.2px;line-height:21px;color:#111;letter-spacing:0.063px;">Díky aktivaci remanence (symbol baterie) bude na výstupu</span>
<span style="left:1094.40px;top:614px;font-size:15.2px;line-height:21px;color:#111;letter-spacing:0.062px;">stav před výpadkem proudu</span>
<span style="left:1094.40px;top:672px;font-size:15.2px;line-height:21px;color:#e8344e;letter-spacing:-0.019px;">Online-Info</span>
<span style="left:1094.00px;top:940px;font-size:30px;line-height:42px;color:#000;letter-spacing:0.250px;font-weight:bold;">Obsah</span>
<div style="left:1169.8px;top:702.7px;width:275.79999999999995px;height:148.29999999999995px;background:#ffffff;border:1px solid #8fd07a;box-shadow:0 1px 7px rgba(0,0,0,0.13);"></div>
<div style="left:1169.8px;top:702.7px;width:275.79999999999995px;height:29.8px;background:#69c350;"></div>
<div style="left:1170.8px;top:732.5px;width:273.79999999999995px;height:19.4px;background:#e9e9e9;"></div>
<span style="left:1177.80px;top:706px;font-size:16px;line-height:22px;color:#ffffff;letter-spacing:0.079px;font-weight:bold;">Lighting Controller</span>
<div style="left:1420.8px;top:708.7px;width:19.6px;height:19.6px;background:#ffffff;border-radius:50%;"></div>
<svg style="left:1429.2px;top:713.2px;" width="3" height="10" viewBox="0 0 3 10"><path d="M0.3 0H2.7V2.4H0.3Z M0.3 3.8H2.7V10H0.3Z" fill="#111"/></svg>
<span style="left:1240.85px;top:731px;font-size:15.5px;line-height:22px;color:#333;letter-spacing:0.361px;">Lighting Controller</span>
<span style="left:1183.00px;top:749px;font-size:15px;line-height:21px;color:#111;letter-spacing:-0.460px;">+</span>
<span style="left:1234.50px;top:750px;font-size:15.5px;line-height:22px;color:#8a8a8a;letter-spacing:0.255px;">Nicht zugeordnet</span>
<span style="left:1400.30px;top:750px;font-size:15.5px;line-height:22px;color:#111;letter-spacing:-0.108px;">AQ1</span>
<span style="left:1182.50px;top:770px;font-size:15.5px;line-height:22px;color:#111;letter-spacing:0.538px;">Mv</span>
<span style="left:1264.20px;top:770px;font-size:15.5px;line-height:22px;color:#8a8a8a;letter-spacing:0.182px;">Beleuchtung</span>
<span style="left:1182.50px;top:790px;font-size:15.5px;line-height:22px;color:#111;letter-spacing:0.262px;">A</span>
<span style="left:1182.50px;top:810px;font-size:15.5px;line-height:22px;color:#111;letter-spacing:0.117px;">AIb</span>
<svg style="left:1421px;top:774.6px;" width="14" height="14" viewBox="0 0 14 14"><circle cx="7" cy="7" r="7" fill="#8c8c8c"/><path d="M3.2 7H10.8M7 3.2V10.8" stroke="#fff" stroke-width="1.5"/></svg>
<svg style="left:1179.9px;top:833.6px;" width="14" height="14" viewBox="0 0 14 14"><circle cx="7" cy="7" r="7" fill="#8c8c8c"/><path d="M3.2 7H10.8M7 3.2V10.8" stroke="#fff" stroke-width="1.5"/></svg>
<svg style="left:1159.6px;top:757.7px;" width="10.4" height="10" viewBox="0 0 10.4 10"><path d="M0 0H10.4V10H0L3.4 5Z" fill="#f5a742"/></svg>
<svg style="left:1159.6px;top:777.3px;" width="10.4" height="10" viewBox="0 0 10.4 10"><path d="M0 0H10.4V10H0L3.4 5Z" fill="#f5a742"/></svg>
<svg style="left:1159.6px;top:797px;" width="10.4" height="10" viewBox="0 0 10.4 10"><path d="M0 0H10.4V10H0L3.4 5Z" fill="#f5a742"/></svg>
<svg style="left:1159.6px;top:816.6px;" width="10.4" height="10" viewBox="0 0 10.4 10"><path d="M0 0H10.4V10H0L3.4 5Z" fill="#f5a742"/></svg>
<svg style="left:1159.6px;top:836.2px;" width="10.4" height="10" viewBox="0 0 10.4 10"><path d="M0 0H10.4V10H0L3.4 5Z" fill="#d2d2d2"/></svg>
<svg style="left:1445.6px;top:757.7px;" width="10.4" height="10" viewBox="0 0 10.4 10"><path d="M0 0H6.6L10.4 5L6.6 10H0Z" fill="#69c350"/></svg>
<svg style="left:1445.6px;top:777.3px;" width="10.4" height="10" viewBox="0 0 10.4 10"><path d="M0 0H6.6L10.4 5L6.6 10H0Z" fill="#d2d2d2"/></svg>
<div style="left:369.5px;top:1033.6px;width:320.5px;height:1px;background:#2a2a2a;"></div>
<div style="left:370.8px;top:1033px;width:71.89999999999998px;height:24px;background:#f5f5f5;border:1px solid #3a3a3a;border-top:none;border-radius:0 0 5px 5px;"></div>
<svg style="left:375.3px;top:1037px;" width="17" height="16" viewBox="0 0 17 16"><path d="M0.65 4.85H11.75V14.55H0.65Z" fill="#f4f4f4" stroke="#808080" stroke-width="1.3"/><path d="M2.2 9.9H3.8M4.9 9.9H10.2M2.2 12.4H3.8M4.9 12.4H10.2" stroke="#808080" stroke-width="1.1"/><path d="M2 7.9L7.6 2H13.4L15.4 5.2H9.4L4.6 9.6Z" fill="#76b41c" fill-opacity="0.78"/><path d="M10.9 1.2H16.3V8Z" fill="#76b41c"/></svg>
<span style="left:393.60px;top:1038px;font-size:11.5px;line-height:16px;color:#2a2a2a;letter-spacing:-0.228px;">Periférie</span>
<div style="left:441.7px;top:1034.5px;width:75.19999999999999px;height:22.5px;border:1px solid #3a3a3a;border-top:none;border-radius:0 0 5px 5px;"></div>
<svg style="left:446.2px;top:1037px;" width="17" height="16" viewBox="0 0 17 16"><path d="M0.65 4.85H11.75V14.55H0.65Z" fill="#f4f4f4" stroke="#808080" stroke-width="1.3"/><path d="M2.2 9.9H3.8M4.9 9.9H10.2M2.2 12.4H3.8M4.9 12.4H10.2" stroke="#808080" stroke-width="1.1"/><path d="M2 7.9L7.6 2H13.4L15.4 5.2H9.4L4.6 9.6Z" fill="#76b41c" fill-opacity="0.78"/><path d="M10.9 1.2H16.3V8Z" fill="#76b41c"/></svg>
<span style="left:465.50px;top:1038px;font-size:11.5px;line-height:16px;color:#2a2a2a;letter-spacing:-0.216px;">Program</span>
<div style="left:515.9px;top:1034.5px;width:78.89999999999998px;height:22.5px;border:1px solid #3a3a3a;border-top:none;border-radius:0 0 5px 5px;"></div>
<svg style="left:520.4px;top:1037px;" width="17" height="16" viewBox="0 0 17 16"><path d="M0.65 4.85H11.75V14.55H0.65Z" fill="#f4f4f4" stroke="#808080" stroke-width="1.3"/><path d="M2.2 9.9H3.8M4.9 9.9H10.2M2.2 12.4H3.8M4.9 12.4H10.2" stroke="#808080" stroke-width="1.1"/><path d="M2 7.9L7.6 2H13.4L15.4 5.2H9.4L4.6 9.6Z" fill="#76b41c" fill-opacity="0.78"/><path d="M10.9 1.2H16.3V8Z" fill="#76b41c"/></svg>
<span style="left:539.30px;top:1038px;font-size:11.5px;line-height:16px;color:#2a2a2a;letter-spacing:0.236px;">Místnosti</span>
<div style="left:593.8px;top:1034.5px;width:71.30000000000007px;height:22.5px;border:1px solid #3a3a3a;border-top:none;border-radius:0 0 5px 5px;"></div>
<svg style="left:598.3px;top:1037px;" width="17" height="16" viewBox="0 0 17 16"><path d="M0.65 4.85H11.75V14.55H0.65Z" fill="#f4f4f4" stroke="#808080" stroke-width="1.3"/><path d="M2.2 9.9H3.8M4.9 9.9H10.2M2.2 12.4H3.8M4.9 12.4H10.2" stroke="#808080" stroke-width="1.1"/><path d="M2 7.9L7.6 2H13.4L15.4 5.2H9.4L4.6 9.6Z" fill="#76b41c" fill-opacity="0.78"/><path d="M10.9 1.2H16.3V8Z" fill="#76b41c"/></svg>
<span style="left:616.60px;top:1038px;font-size:11.5px;line-height:16px;color:#2a2a2a;letter-spacing:-0.183px;">Zařízení</span>
<div style="left:698px;top:1035px;width:1154.2px;height:1px;background:#1e1e1e;"></div>
<div style="left:698px;top:1036px;width:1154.2px;height:19px;background:#f4f4f4;"></div>
<div style="left:698.4px;top:1037.5px;width:13.5px;height:13.5px;background:#f7f7f7;border-right:1px solid #3a3a3a;border-bottom:1px solid #3a3a3a;border-left:1px solid #fff;border-top:1px solid #fff;"></div>
<svg style="left:698.9px;top:1038.5px;" width="12" height="12" viewBox="0 0 12 12"><path d="M3 3.5H9L6 7.5Z" fill="#111"/></svg>
<div style="left:714.4499999999999px;top:1037.5px;width:13.5px;height:13.5px;background:#f7f7f7;border-right:1px solid #3a3a3a;border-bottom:1px solid #3a3a3a;border-left:1px solid #fff;border-top:1px solid #fff;"></div>
<svg style="left:714.9499999999999px;top:1038.5px;" width="12" height="12" viewBox="0 0 12 12"><path d="M2.5 2.5H9.5V9.5H2.5Z M5 5H9.5 M5 5V9.5" fill="none" stroke="#111" stroke-width="1"/></svg>
<div style="left:730.5px;top:1037.5px;width:13.5px;height:13.5px;background:#f7f7f7;border-right:1px solid #3a3a3a;border-bottom:1px solid #3a3a3a;border-left:1px solid #fff;border-top:1px solid #fff;"></div>
<svg style="left:731.0px;top:1038.5px;" width="12" height="12" viewBox="0 0 12 12"><path d="M3.5 2V9" stroke="#111" stroke-width="1.2"/><path d="M9 2V9L5 5.5Z" fill="#111"/></svg>
<div style="left:746.55px;top:1037.5px;width:13.5px;height:13.5px;background:#f7f7f7;border-right:1px solid #3a3a3a;border-bottom:1px solid #3a3a3a;border-left:1px solid #fff;border-top:1px solid #fff;"></div>
<svg style="left:747.05px;top:1038.5px;" width="12" height="12" viewBox="0 0 12 12"><path d="M8 2V9L4 5.5Z" fill="#111"/></svg>
<div style="left:762.6px;top:1037.5px;width:13.5px;height:13.5px;background:#f7f7f7;border-right:1px solid #3a3a3a;border-bottom:1px solid #3a3a3a;border-left:1px solid #fff;border-top:1px solid #fff;"></div>
<svg style="left:763.1px;top:1038.5px;" width="12" height="12" viewBox="0 0 12 12"><path d="M4.5 2V9L8.5 5.5Z" fill="#111"/></svg>
<div style="left:778.65px;top:1037.5px;width:13.5px;height:13.5px;background:#f7f7f7;border-right:1px solid #3a3a3a;border-bottom:1px solid #3a3a3a;border-left:1px solid #fff;border-top:1px solid #fff;"></div>
<svg style="left:779.15px;top:1038.5px;" width="12" height="12" viewBox="0 0 12 12"><path d="M9 2V9" stroke="#111" stroke-width="1.2"/><path d="M3.5 2V9L7.5 5.5Z" fill="#111"/></svg>
<svg style="left:795px;top:1035.5px;" width="840" height="18" viewBox="0 0 840 18"><path d="M795.9 0L802.9 16.5H826.4L833.4 0Z" fill="#fbfbfb" stroke="none"/><path d="M795.9 0L802.9 16.5H826.4L833.4 0" fill="none" stroke="#111" stroke-width="1"/><path d="M734.5 0L741.5 16.5H795.7L802.7 0Z" fill="#fbfbfb" stroke="none"/><path d="M734.5 0L741.5 16.5H795.7L802.7 0" fill="none" stroke="#111" stroke-width="1"/><path d="M660.7 0L667.7 16.5H734.2L741.2 0Z" fill="#fbfbfb" stroke="none"/><path d="M660.7 0L667.7 16.5H734.2L741.2 0" fill="none" stroke="#111" stroke-width="1"/><path d="M574.1 0L581.1 16.5H659.8L666.8 0Z" fill="#fbfbfb" stroke="none"/><path d="M574.1 0L581.1 16.5H659.8L666.8 0" fill="none" stroke="#111" stroke-width="1"/><path d="M521.7 0L528.7 16.5H572.5L579.5 0Z" fill="#fbfbfb" stroke="none"/><path d="M521.7 0L528.7 16.5H572.5L579.5 0" fill="none" stroke="#111" stroke-width="1"/><path d="M400.4 0L407.4 16.5H461.9L468.9 0Z" fill="#fbfbfb" stroke="none"/><path d="M400.4 0L407.4 16.5H461.9L468.9 0" fill="none" stroke="#111" stroke-width="1"/><path d="M319.6 0L326.6 16.5H399.2L406.2 0Z" fill="#fbfbfb" stroke="none"/><path d="M319.6 0L326.6 16.5H399.2L406.2 0" fill="none" stroke="#111" stroke-width="1"/><path d="M183.7 0L190.7 16.5H318.3L325.3 0Z" fill="#fbfbfb" stroke="none"/><path d="M183.7 0L190.7 16.5H318.3L325.3 0" fill="none" stroke="#111" stroke-width="1"/><path d="M85.1 0L92.1 16.5H182.2L189.2 0Z" fill="#fbfbfb" stroke="none"/><path d="M85.1 0L92.1 16.5H182.2L189.2 0" fill="none" stroke="#111" stroke-width="1"/><path d="M3.6 0L10.6 16.5H82.9L89.9 0Z" fill="#fbfbfb" stroke="none"/><path d="M3.6 0L10.6 16.5H82.9L89.9 0" fill="none" stroke="#111" stroke-width="1"/><path d="M463.6 -1L471.1 16.5H521.7L529.2 -1Z" fill="#fff" stroke="none"/><path d="M464.1 0L471.1 16.5H521.7L528.7 0" fill="none" stroke="#111" stroke-width="1"/></svg>
<span style="left:808.10px;top:1036px;font-size:11.5px;line-height:16px;color:#222;letter-spacing:0.020px;">Titulní strana</span>
<span style="left:889.60px;top:1036px;font-size:11.5px;line-height:16px;color:#222;letter-spacing:0.024px;">Centrální funkce</span>
<span style="left:988.20px;top:1036px;font-size:11.5px;line-height:16px;color:#222;letter-spacing:0.006px;">Centrální funkce Topení</span>
<span style="left:1124.10px;top:1036px;font-size:11.5px;line-height:16px;color:#222;letter-spacing:0.070px;">Dětský pokoj</span>
<span style="left:1204.90px;top:1036px;font-size:11.5px;line-height:16px;color:#222;letter-spacing:-0.014px;">Koupelna</span>
<span style="left:1268.60px;top:1036px;font-size:11.5px;line-height:16px;color:#222;letter-spacing:-0.661px;font-weight:bold;">Kuchyně</span>
<span style="left:1326.20px;top:1036px;font-size:11.5px;line-height:16px;color:#222;letter-spacing:-0.306px;">Ložnice</span>
<span style="left:1378.60px;top:1036px;font-size:11.5px;line-height:16px;color:#222;letter-spacing:-0.014px;">Obývací pokoj</span>
<span style="left:1465.20px;top:1036px;font-size:11.5px;line-height:16px;color:#222;letter-spacing:0.189px;">Okolí domu</span>
<span style="left:1539.00px;top:1036px;font-size:11.5px;line-height:16px;color:#222;letter-spacing:-0.209px;">Strana 10</span>
<span style="left:1600.40px;top:1036px;font-size:11.5px;line-height:16px;color:#222;letter-spacing:-1.659px;">WC</span>
<div style="left:1667px;top:1037px;width:1px;height:15px;background:#333;"></div>
<div style="left:1667px;top:1037px;width:4px;height:1px;background:#333;"></div>
<div style="left:1672px;top:1037px;width:160px;height:15px;background:#f0f0f0;"></div>
<div style="left:1698px;top:1037px;width:90px;height:15px;background:#cdcdcd;"></div>
<svg style="left:1677px;top:1040px;" width="6" height="9" viewBox="0 0 6 9"><path d="M5 0.8L1.2 4.5L5 8.2" fill="none" stroke="#505050" stroke-width="2"/></svg>
<svg style="left:1821px;top:1040px;" width="6" height="9" viewBox="0 0 6 9"><path d="M1 0.8L4.8 4.5L1 8.2" fill="none" stroke="#505050" stroke-width="2"/></svg>
<div style="left:0px;top:1057px;width:1855px;height:2px;background:#fafafa;"></div>
<div style="left:4.0px;top:1060.5px;width:1px;height:20px;background:#e4e4e4;"></div>
<svg style="left:7.0px;top:1063px;" width="17" height="16" viewBox="0 0 17 16"><path d="M0.65 4.85H11.75V14.55H0.65Z" fill="#f4f4f4" stroke="#808080" stroke-width="1.3"/><path d="M2.2 9.9H3.8M4.9 9.9H10.2M2.2 12.4H3.8M4.9 12.4H10.2" stroke="#808080" stroke-width="1.1"/><path d="M2 7.9L7.6 2H13.4L15.4 5.2H9.4L4.6 9.6Z" fill="#76b41c" fill-opacity="0.78"/><path d="M10.9 1.2H16.3V8Z" fill="#76b41c"/></svg>
<span style="left:32.90px;top:1063px;font-size:11.5px;line-height:16px;color:#3c3c3c;letter-spacing:-0.036px;">Výsledky hledání</span>
<div style="left:136.7px;top:1060.5px;width:1px;height:20px;background:#e4e4e4;"></div>
<svg style="left:139.7px;top:1063px;" width="17" height="16" viewBox="0 0 17 16"><path d="M0.65 4.85H11.75V14.55H0.65Z" fill="#f4f4f4" stroke="#808080" stroke-width="1.3"/><path d="M2.2 9.9H3.8M4.9 9.9H10.2M2.2 12.4H3.8M4.9 12.4H10.2" stroke="#808080" stroke-width="1.1"/><path d="M2 7.9L7.6 2H13.4L15.4 5.2H9.4L4.6 9.6Z" fill="#76b41c" fill-opacity="0.78"/><path d="M10.9 1.2H16.3V8Z" fill="#76b41c"/></svg>
<span style="left:166.00px;top:1063px;font-size:11.5px;line-height:16px;color:#3c3c3c;letter-spacing:-1.318px;">EIB</span>
<div style="left:199.5px;top:1060.5px;width:1px;height:20px;background:#e4e4e4;"></div>
<svg style="left:202.5px;top:1063px;" width="17" height="16" viewBox="0 0 17 16"><path d="M0.65 4.85H11.75V14.55H0.65Z" fill="#f4f4f4" stroke="#808080" stroke-width="1.3"/><path d="M2.2 9.9H3.8M4.9 9.9H10.2M2.2 12.4H3.8M4.9 12.4H10.2" stroke="#808080" stroke-width="1.1"/><path d="M2 7.9L7.6 2H13.4L15.4 5.2H9.4L4.6 9.6Z" fill="#76b41c" fill-opacity="0.78"/><path d="M10.9 1.2H16.3V8Z" fill="#76b41c"/></svg>
<span style="left:229.00px;top:1063px;font-size:11.5px;line-height:16px;color:#3c3c3c;letter-spacing:0.173px;">Air</span>
<div style="left:260.7px;top:1060.5px;width:1px;height:20px;background:#e4e4e4;"></div>
<svg style="left:263.7px;top:1063px;" width="17" height="16" viewBox="0 0 17 16"><path d="M0.65 4.85H11.75V14.55H0.65Z" fill="#f4f4f4" stroke="#808080" stroke-width="1.3"/><path d="M2.2 9.9H3.8M4.9 9.9H10.2M2.2 12.4H3.8M4.9 12.4H10.2" stroke="#808080" stroke-width="1.1"/><path d="M2 7.9L7.6 2H13.4L15.4 5.2H9.4L4.6 9.6Z" fill="#76b41c" fill-opacity="0.78"/><path d="M10.9 1.2H16.3V8Z" fill="#76b41c"/></svg>
<span style="left:289.80px;top:1063px;font-size:11.5px;line-height:16px;color:#3c3c3c;letter-spacing:-0.325px;">EnOcean</span>
<div style="left:353.5px;top:1060.5px;width:1px;height:20px;background:#e4e4e4;"></div>
<svg style="left:356.5px;top:1063px;" width="17" height="16" viewBox="0 0 17 16"><path d="M0.65 4.85H11.75V14.55H0.65Z" fill="#f4f4f4" stroke="#808080" stroke-width="1.3"/><path d="M2.2 9.9H3.8M4.9 9.9H10.2M2.2 12.4H3.8M4.9 12.4H10.2" stroke="#808080" stroke-width="1.1"/><path d="M2 7.9L7.6 2H13.4L15.4 5.2H9.4L4.6 9.6Z" fill="#76b41c" fill-opacity="0.78"/><path d="M10.9 1.2H16.3V8Z" fill="#76b41c"/></svg>
<span style="left:383.40px;top:1063px;font-size:11.5px;line-height:16px;color:#3c3c3c;letter-spacing:-0.052px;">1-Wire</span>
<div style="left:434.7px;top:1060.5px;width:1px;height:20px;background:#e4e4e4;"></div>
<svg style="left:437.7px;top:1063px;" width="17" height="16" viewBox="0 0 17 16"><path d="M0.65 4.85H11.75V14.55H0.65Z" fill="#f4f4f4" stroke="#808080" stroke-width="1.3"/><path d="M2.2 9.9H3.8M4.9 9.9H10.2M2.2 12.4H3.8M4.9 12.4H10.2" stroke="#808080" stroke-width="1.1"/><path d="M2 7.9L7.6 2H13.4L15.4 5.2H9.4L4.6 9.6Z" fill="#76b41c" fill-opacity="0.78"/><path d="M10.9 1.2H16.3V8Z" fill="#76b41c"/></svg>
<span style="left:464.20px;top:1063px;font-size:11.5px;line-height:16px;color:#3c3c3c;letter-spacing:-0.752px;">RS232/RS485</span>
<div style="left:547.5px;top:1060.5px;width:1px;height:20px;background:#e4e4e4;"></div>
<svg style="left:550.5px;top:1063px;" width="17" height="16" viewBox="0 0 17 16"><path d="M0.65 4.85H11.75V14.55H0.65Z" fill="#f4f4f4" stroke="#808080" stroke-width="1.3"/><path d="M2.2 9.9H3.8M4.9 9.9H10.2M2.2 12.4H3.8M4.9 12.4H10.2" stroke="#808080" stroke-width="1.1"/><path d="M2 7.9L7.6 2H13.4L15.4 5.2H9.4L4.6 9.6Z" fill="#76b41c" fill-opacity="0.78"/><path d="M10.9 1.2H16.3V8Z" fill="#76b41c"/></svg>
<span style="left:577.40px;top:1063px;font-size:11.5px;line-height:16px;color:#3c3c3c;letter-spacing:-1.240px;">UDP</span>
<div style="left:616.5px;top:1060.5px;width:1px;height:20px;background:#e4e4e4;"></div>
<svg style="left:619.5px;top:1063px;" width="17" height="16" viewBox="0 0 17 16"><path d="M0.65 4.85H11.75V14.55H0.65Z" fill="#f4f4f4" stroke="#808080" stroke-width="1.3"/><path d="M2.2 9.9H3.8M4.9 9.9H10.2M2.2 12.4H3.8M4.9 12.4H10.2" stroke="#808080" stroke-width="1.1"/><path d="M2 7.9L7.6 2H13.4L15.4 5.2H9.4L4.6 9.6Z" fill="#76b41c" fill-opacity="0.78"/><path d="M10.9 1.2H16.3V8Z" fill="#76b41c"/></svg>
<span style="left:646.00px;top:1063px;font-size:11.5px;line-height:16px;color:#3c3c3c;letter-spacing:-1.700px;">IR</span>
<div style="left:673.8px;top:1060.5px;width:1px;height:20px;background:#e4e4e4;"></div>
<svg style="left:676.8px;top:1063px;" width="17" height="16" viewBox="0 0 17 16"><path d="M0.65 4.85H11.75V14.55H0.65Z" fill="#f4f4f4" stroke="#808080" stroke-width="1.3"/><path d="M2.2 9.9H3.8M4.9 9.9H10.2M2.2 12.4H3.8M4.9 12.4H10.2" stroke="#808080" stroke-width="1.1"/><path d="M2 7.9L7.6 2H13.4L15.4 5.2H9.4L4.6 9.6Z" fill="#76b41c" fill-opacity="0.78"/><path d="M10.9 1.2H16.3V8Z" fill="#76b41c"/></svg>
<span style="left:703.00px;top:1063px;font-size:11.5px;line-height:16px;color:#3c3c3c;letter-spacing:-0.244px;">Log</span>
<div style="left:739.6px;top:1060.5px;width:1px;height:20px;background:#e4e4e4;"></div>
<svg style="left:742.6px;top:1063px;" width="17" height="16" viewBox="0 0 17 16"><path d="M0.65 4.85H11.75V14.55H0.65Z" fill="#f4f4f4" stroke="#808080" stroke-width="1.3"/><path d="M2.2 9.9H3.8M4.9 9.9H10.2M2.2 12.4H3.8M4.9 12.4H10.2" stroke="#808080" stroke-width="1.1"/><path d="M2 7.9L7.6 2H13.4L15.4 5.2H9.4L4.6 9.6Z" fill="#76b41c" fill-opacity="0.78"/><path d="M10.9 1.2H16.3V8Z" fill="#76b41c"/></svg>
<span style="left:769.20px;top:1063px;font-size:11.5px;line-height:16px;color:#3c3c3c;letter-spacing:-0.137px;">Dali</span>
<div style="left:807.5px;top:1060.5px;width:1px;height:20px;background:#e4e4e4;"></div>
<svg style="left:810.5px;top:1063px;" width="17" height="16" viewBox="0 0 17 16"><path d="M0.65 4.85H11.75V14.55H0.65Z" fill="#f4f4f4" stroke="#808080" stroke-width="1.3"/><path d="M2.2 9.9H3.8M4.9 9.9H10.2M2.2 12.4H3.8M4.9 12.4H10.2" stroke="#808080" stroke-width="1.1"/><path d="M2 7.9L7.6 2H13.4L15.4 5.2H9.4L4.6 9.6Z" fill="#76b41c" fill-opacity="0.78"/><path d="M10.9 1.2H16.3V8Z" fill="#76b41c"/></svg>
<span style="left:835.50px;top:1063px;font-size:11.5px;line-height:16px;color:#3c3c3c;letter-spacing:-0.940px;">Tree</span>
<div style="left:874.8px;top:1060.5px;width:1px;height:20px;background:#e4e4e4;"></div>
<svg style="left:877.8px;top:1063px;" width="17" height="16" viewBox="0 0 17 16"><path d="M0.65 4.85H11.75V14.55H0.65Z" fill="#f4f4f4" stroke="#808080" stroke-width="1.3"/><path d="M2.2 9.9H3.8M4.9 9.9H10.2M2.2 12.4H3.8M4.9 12.4H10.2" stroke="#808080" stroke-width="1.1"/><path d="M2 7.9L7.6 2H13.4L15.4 5.2H9.4L4.6 9.6Z" fill="#76b41c" fill-opacity="0.78"/><path d="M10.9 1.2H16.3V8Z" fill="#76b41c"/></svg>
<span style="left:903.50px;top:1063px;font-size:11.5px;line-height:16px;color:#3c3c3c;letter-spacing:0.311px;">Internorm</span>
<div style="left:973.1px;top:1060.5px;width:1px;height:20px;background:#e4e4e4;"></div>
<svg style="left:976.1px;top:1063px;" width="17" height="16" viewBox="0 0 17 16"><path d="M0.65 4.85H11.75V14.55H0.65Z" fill="#f4f4f4" stroke="#808080" stroke-width="1.3"/><path d="M2.2 9.9H3.8M4.9 9.9H10.2M2.2 12.4H3.8M4.9 12.4H10.2" stroke="#808080" stroke-width="1.1"/><path d="M2 7.9L7.6 2H13.4L15.4 5.2H9.4L4.6 9.6Z" fill="#76b41c" fill-opacity="0.78"/><path d="M10.9 1.2H16.3V8Z" fill="#76b41c"/></svg>
<span style="left:1002.10px;top:1063px;font-size:11.5px;line-height:16px;color:#3c3c3c;letter-spacing:-1.317px;">NFC</span>
<div style="left:1040.9px;top:1060.5px;width:1px;height:20px;background:#e6e6e6;"></div>
<div style="left:4.5px;top:1060.5px;width:1037px;height:1px;background:#ececec;"></div>
</body></html>
